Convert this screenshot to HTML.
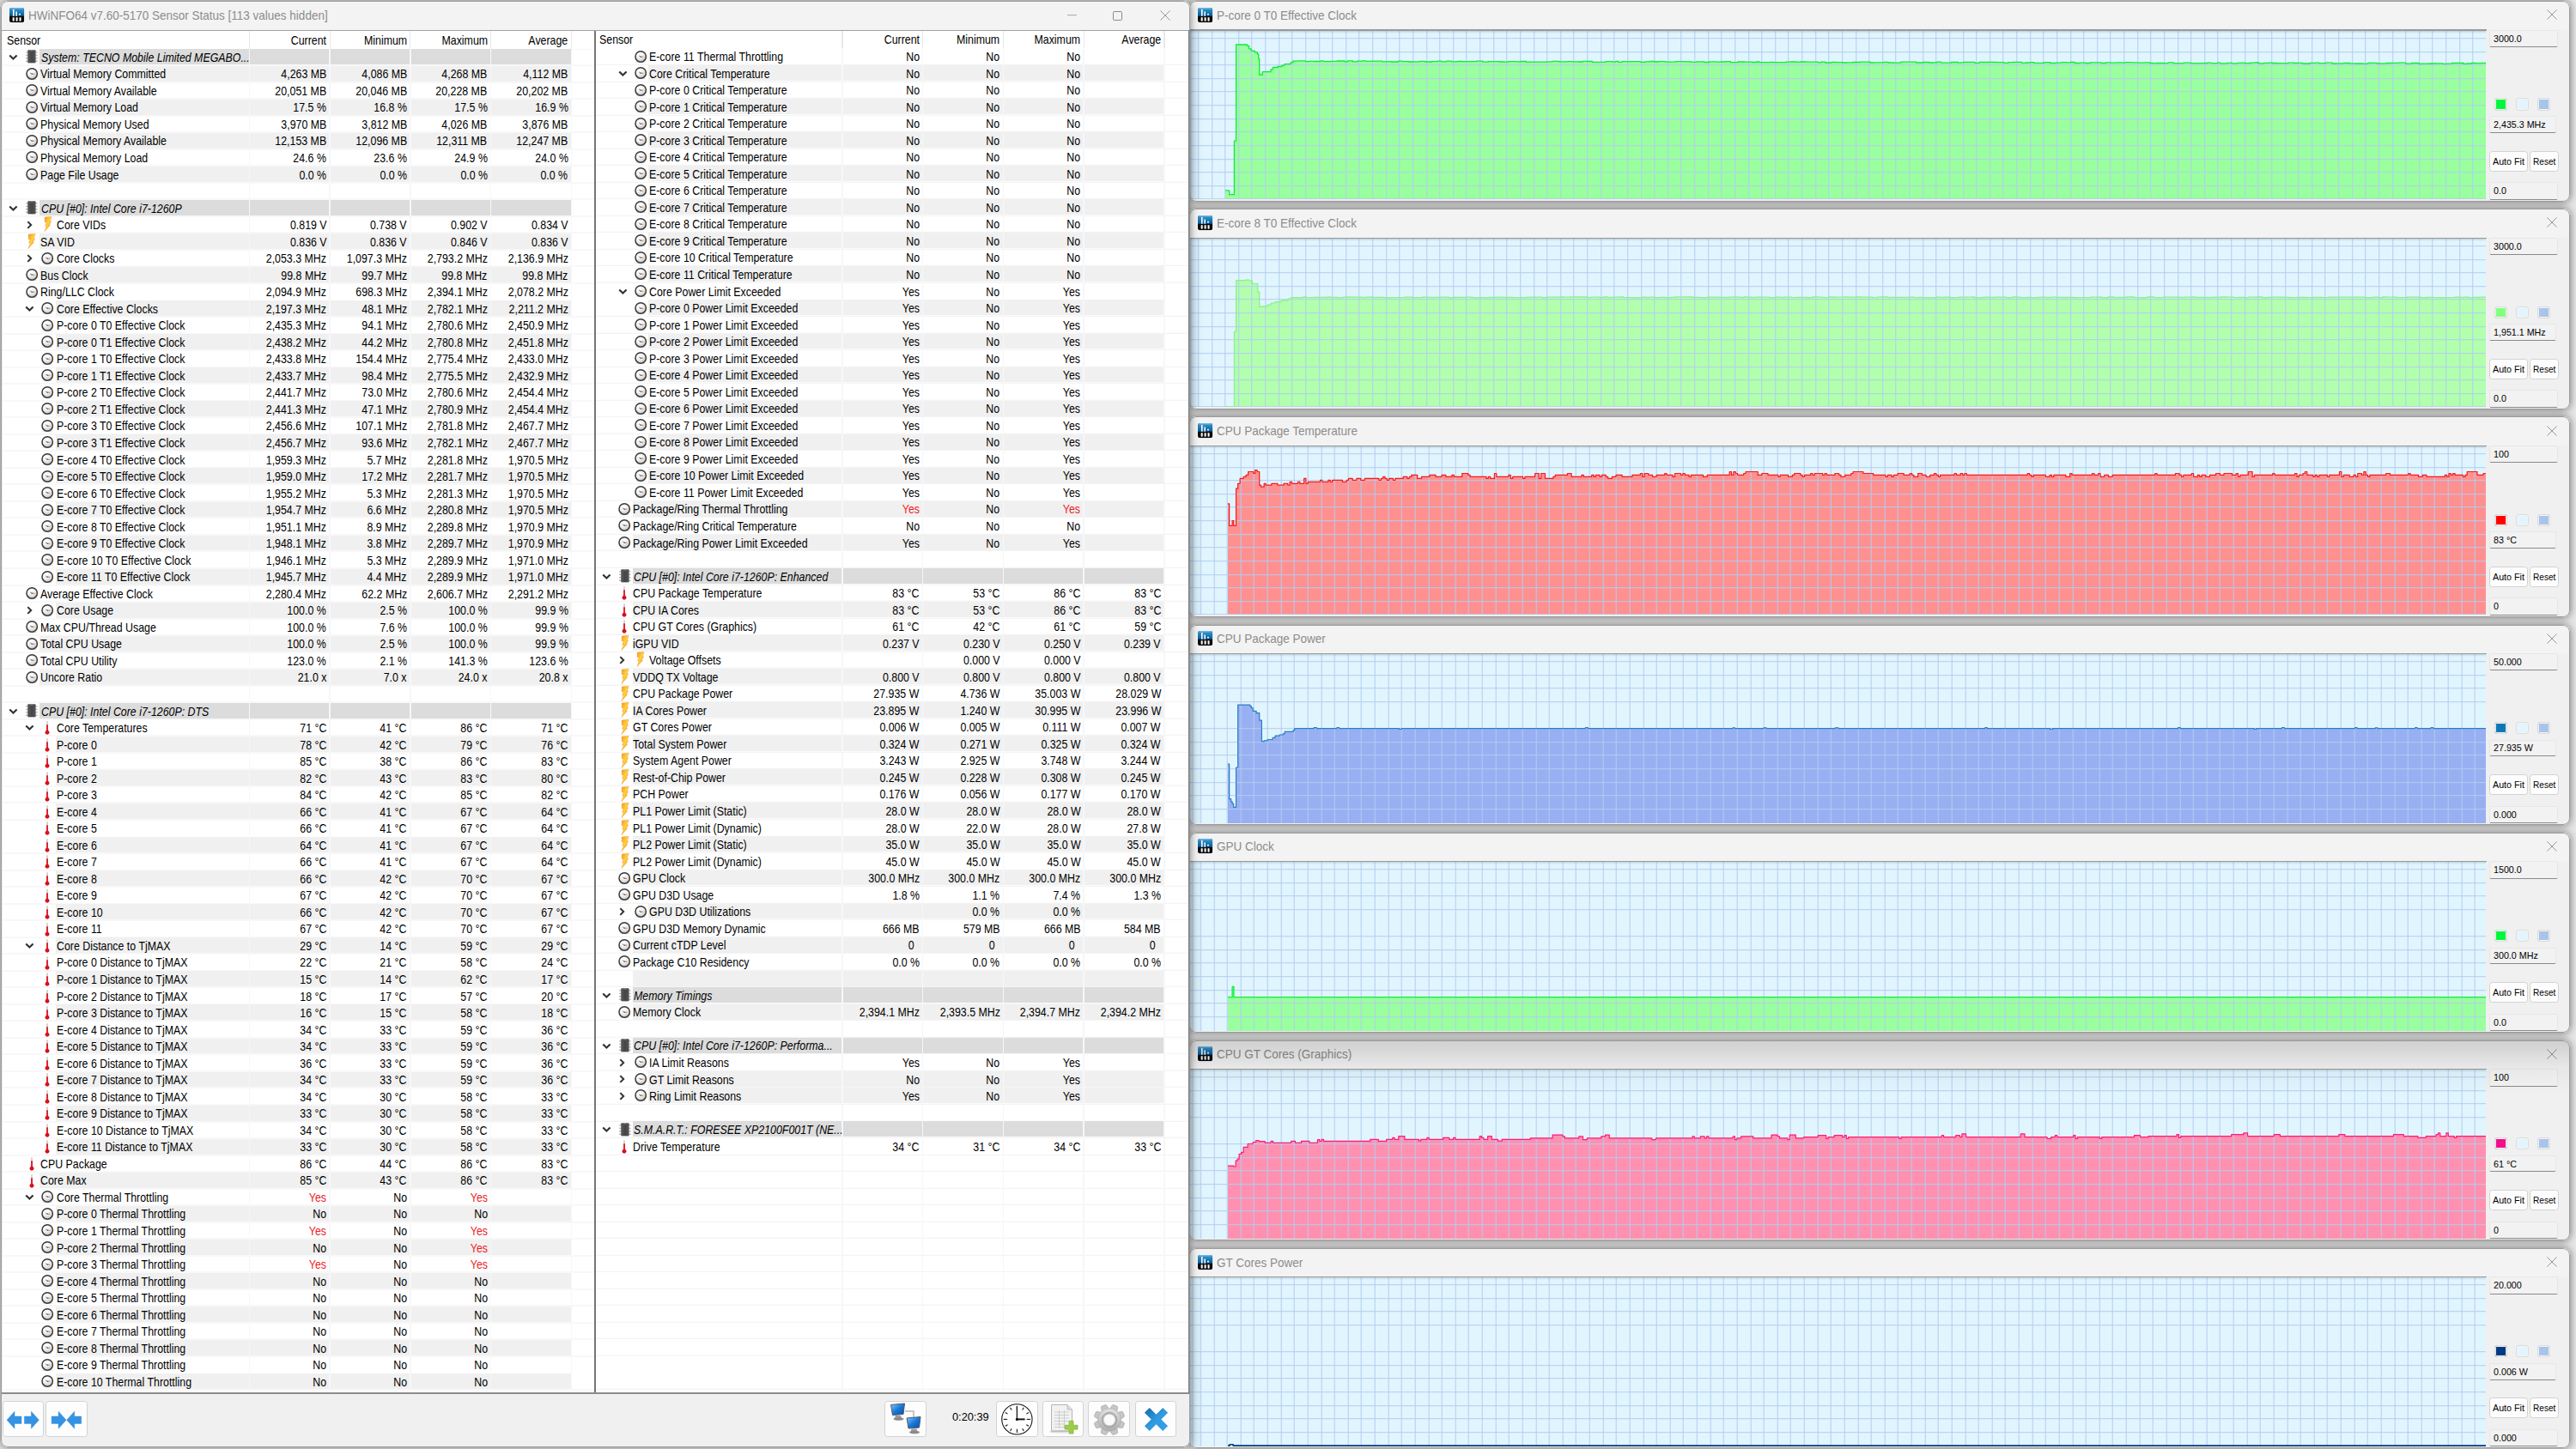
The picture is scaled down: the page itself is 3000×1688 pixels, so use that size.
<!DOCTYPE html><html><head><meta charset="utf-8"><title>HWiNFO64 Sensor Status</title><style>
*{box-sizing:border-box}
html,body{margin:0;padding:0}
body{width:3000px;height:1688px;overflow:hidden;position:relative;background:#e6e6e6;font-family:"Liberation Sans",sans-serif;color:#000}
p,b,i,u,s{position:absolute;margin:0;padding:0;font-weight:normal;font-style:normal;text-decoration:none;display:block}
svg{position:absolute;overflow:visible}
.win{position:absolute;background:#f0f0f0;border-radius:8px;box-shadow:0 0 8px 1px rgba(0,0,0,.42);overflow:hidden}
.wb{left:0;top:0;right:0;bottom:0;border:1px solid #9c9c9c;border-radius:8px}
.tb{position:absolute;left:0;top:0;right:0;background:#f3f3f3}
.tt{font-size:14.4px;line-height:20px;color:#8c8c8c;white-space:nowrap;transform:scaleX(.938);transform-origin:0 0}
.list{position:absolute;background:#fff;overflow:hidden}
.hl{left:0;right:0;top:0;bottom:0;background-image:repeating-linear-gradient(to bottom,transparent 0,transparent 18.53125px,#f1f1f1 18.53125px,#f1f1f1 19.53125px)}
.l,.v,.hd{font-size:14.1px;line-height:19.53125px;height:19.53125px;white-space:pre;transform:scaleX(0.878)}
.l{transform-origin:0 0;transform:scaleX(.878)}
.v,.hr{transform-origin:100% 0;text-align:right}
.it{font-style:italic}
.r{color:#ee1c25}
.sg{background:#f0f0f0;height:17.9px}
.sh{background:#dcdcdc;height:17.9px}
.vs{width:1.4px;top:0;bottom:0;background:#f7f7f7}
.btn{position:absolute;background:#fdfdfd;border:1px solid #d2d2d2;border-radius:3.5px}
.ga{position:absolute;background:#e1f5fe;overflow:hidden}
.gg{left:0;top:0;right:0;bottom:0}
.sb{font-size:11.4px;line-height:16px;white-space:pre;transform:scaleX(.94);transform-origin:0 0}
.ed{position:absolute;background:#f2f2f2;border:1px solid #e7e7e7;border-bottom:1.2px solid #8a8a8a;border-radius:2px}
.sq{position:absolute;width:14.4px;height:14.4px;border:1px solid #dcdcdc;border-radius:3px;box-shadow:inset 0 0 0 .9px #f5f5f5}
</style></head><body>
<svg width="0" height="0" style="left:-10px;top:-10px"><defs>
<radialGradient id="cg" cx="40%" cy="30%" r="70%"><stop offset="0" stop-color="#fff"/><stop offset=".5" stop-color="#f0f0f0"/><stop offset="1" stop-color="#c4c4c4"/></radialGradient>
<linearGradient id="bg1" x1="0" y1="0" x2="1" y2="1"><stop offset="0" stop-color="#f7931e"/><stop offset=".45" stop-color="#ffd23c"/><stop offset="1" stop-color="#f08a10"/></linearGradient>
<linearGradient id="chg" x1="0" y1="0" x2="1" y2="0"><stop offset="0" stop-color="#5c5c5c"/><stop offset=".5" stop-color="#454545"/><stop offset="1" stop-color="#565656"/></linearGradient>
<linearGradient id="apb" x1="0" y1="0" x2="0" y2="1"><stop offset="0" stop-color="#7cc4ea"/><stop offset=".25" stop-color="#2a8cc8"/><stop offset="1" stop-color="#075a94"/></linearGradient>
<symbol id="ck" viewBox="0 0 14 14"><ellipse cx="7" cy="13" rx="5.5" ry="1" fill="#000" opacity=".13"/><circle cx="7" cy="6.8" r="6.05" fill="url(#cg)" stroke="#3a3a3a" stroke-width="1.45"/><path d="M7.2 7 L4.9 5.7 M7 7 L9.9 7" stroke="#9a6a4a" stroke-width=".85" fill="none"/><circle cx="7" cy="7" r=".7" fill="#7a5038"/></symbol>
<symbol id="th" viewBox="0 0 6 16"><rect x="2" y="0" width="2" height="6" rx="1" fill="#d4d4d4"/><rect x="2.1" y="4.3" width="1.8" height="9" fill="#d9101c"/><circle cx="3" cy="13.2" r="2.45" fill="#d9101c"/></symbol>
<symbol id="bo" viewBox="0 0 10 18"><path d="M1.2 .7 L9.8 0 L7.4 5.9 L9 5.7 L6.6 10.4 L7.8 10.2 L.9 18 L3.3 11 L1.7 11.2 L3.4 6.6 L1.2 6.9 Z" fill="url(#bg1)" stroke="#e8861a" stroke-width=".35"/></symbol>
<symbol id="ch" viewBox="0 0 14 16"><path d="M0 2.2h2.4v1.4H0zM0 5.7h2.4v1.4H0zM0 9.2h2.4v1.4H0zM0 12.7h2.4v1.4H0zM11.6 2.2H14v1.4h-2.4zM11.6 5.7H14v1.4h-2.4zM11.6 9.2H14v1.4h-2.4zM11.6 12.7H14v1.4h-2.4z" fill="#b4b4b4"/><rect x="2.2" y=".2" width="9.6" height="15.6" rx="1" fill="url(#chg)"/><rect x="5.6" y=".2" width="2.8" height="1.3" fill="#8c8c8c"/></symbol>
<symbol id="cd" viewBox="0 0 10 7"><path d="M1.1 1.3 L5 5.2 L8.9 1.3" fill="none" stroke="#333" stroke-width="2" stroke-linejoin="miter"/></symbol>
<symbol id="cr" viewBox="0 0 7 10"><path d="M1.3 1.1 L5.2 5 L1.3 8.9" fill="none" stroke="#333" stroke-width="2" stroke-linejoin="miter"/></symbol>
<symbol id="ap" viewBox="0 0 17 17"><rect x="0" y="0" width="17" height="17" rx="2.6" fill="#0a0a0a"/><path d="M0 9.6V2.6Q0 0 2.6 0h11.8Q17 0 17 2.6v7z" fill="url(#apb)"/><path d="M3.9 1.9h1.6v7.7H3.9zM7.3 4.4h1.5v5.2H7.3z" fill="#fff"/><rect x="10.9" y="6.6" width="1.9" height="1.9" rx=".5" fill="#fff"/><path d="M3.6 11.2h2v3.6q0 .8-.9.8h-.2q-.9 0-.9-.8zM7.5 11.2h2v3.6q0 .8-.9.8h-.2q-.9 0-.9-.8zM11.4 11.2h2v3.6q0 .8-.9.8h-.2q-.9 0-.9-.8z" fill="#fff"/></symbol>
<symbol id="cx" viewBox="0 0 12 12"><path d="M.4 .4 L11.6 11.6 M11.6 .4 L.4 11.6" stroke="#909090" stroke-width=".95" fill="none"/></symbol>
</defs></svg>
<div class="win" style="z-index:3;left:.5px;top:1.1px;width:1385.3px;height:1684.9px"><div style="position:absolute;left:-.5px;top:-1.1px;width:1385.8px;height:1686px">
<b style="left:0;top:0;right:0;height:35px;background:#f3f3f3"></b>
<svg width="17.2" height="17.2" style="left:10.9px;top:8.9px"><use href="#ap"/></svg>
<p class="tt" style="left:33.4px;top:8.0px">HWiNFO64 v7.60-5170 Sensor Status [113 values hidden]</p>
<svg width="12" height="2" style="left:1242.6px;top:17.4px"><path d="M0 .6H11" stroke="#a8a8a8" stroke-width="1"/></svg>
<svg width="12" height="12" style="left:1296.4px;top:12.6px"><rect x=".5" y=".5" width="10" height="10" rx="1.3" fill="none" stroke="#8a8a8a" stroke-width="1"/></svg>
<svg width="12" height="12" style="left:1351.4px;top:12.2px"><use href="#cx"/></svg>
<b style="left:0;top:34.6px;right:0;height:1.2px;background:#a2a2a2"></b>
<b style="left:1.3px;top:35.8px;width:1.2px;height:1586.6000000000001px;background:#8a8a8a"></b>
<b style="left:0;top:1622.4px;right:0;height:1.3px;background:#8c8c8c"></b>
<div class="list" style="left:2.5px;top:35.8px;width:690.0px;height:1586.6px">
<b class="hl" style="background-position:0 1.47px"></b>
<b class="sh" style="left:43.7px;top:21.40px;width:619.7px"></b>
<b class="sg" style="left:43.7px;top:40.93px;width:619.7px"></b>
<b class="sg" style="left:43.7px;top:79.99px;width:619.7px"></b>
<b class="sg" style="left:43.7px;top:119.06px;width:619.7px"></b>
<b class="sg" style="left:43.7px;top:158.12px;width:619.7px"></b>
<b class="sh" style="left:43.7px;top:197.18px;width:619.7px"></b>
<b class="sg" style="left:43.7px;top:236.24px;width:619.7px"></b>
<b class="sg" style="left:43.7px;top:275.31px;width:619.7px"></b>
<b class="sg" style="left:62.3px;top:314.37px;width:601.1px"></b>
<b class="sg" style="left:62.3px;top:353.43px;width:601.1px"></b>
<b class="sg" style="left:62.3px;top:392.49px;width:601.1px"></b>
<b class="sg" style="left:62.3px;top:431.56px;width:601.1px"></b>
<b class="sg" style="left:62.3px;top:470.62px;width:601.1px"></b>
<b class="sg" style="left:62.3px;top:509.68px;width:601.1px"></b>
<b class="sg" style="left:62.3px;top:548.74px;width:601.1px"></b>
<b class="sg" style="left:62.3px;top:587.81px;width:601.1px"></b>
<b class="sg" style="left:62.3px;top:626.87px;width:601.1px"></b>
<b class="sg" style="left:62.3px;top:665.93px;width:601.1px"></b>
<b class="sg" style="left:43.7px;top:704.99px;width:619.7px"></b>
<b class="sg" style="left:43.7px;top:744.06px;width:619.7px"></b>
<b class="sh" style="left:43.7px;top:783.12px;width:619.7px"></b>
<b class="sg" style="left:62.3px;top:822.18px;width:601.1px"></b>
<b class="sg" style="left:62.3px;top:861.24px;width:601.1px"></b>
<b class="sg" style="left:62.3px;top:900.31px;width:601.1px"></b>
<b class="sg" style="left:62.3px;top:939.37px;width:601.1px"></b>
<b class="sg" style="left:62.3px;top:978.43px;width:601.1px"></b>
<b class="sg" style="left:62.3px;top:1017.49px;width:601.1px"></b>
<b class="sg" style="left:62.3px;top:1056.56px;width:601.1px"></b>
<b class="sg" style="left:62.3px;top:1095.62px;width:601.1px"></b>
<b class="sg" style="left:62.3px;top:1134.68px;width:601.1px"></b>
<b class="sg" style="left:62.3px;top:1173.74px;width:601.1px"></b>
<b class="sg" style="left:62.3px;top:1212.81px;width:601.1px"></b>
<b class="sg" style="left:62.3px;top:1251.87px;width:601.1px"></b>
<b class="sg" style="left:62.3px;top:1290.93px;width:601.1px"></b>
<b class="sg" style="left:43.7px;top:1329.99px;width:619.7px"></b>
<b class="sg" style="left:62.3px;top:1369.06px;width:601.1px"></b>
<b class="sg" style="left:62.3px;top:1408.12px;width:601.1px"></b>
<b class="sg" style="left:62.3px;top:1447.18px;width:601.1px"></b>
<b class="sg" style="left:62.3px;top:1486.24px;width:601.1px"></b>
<b class="sg" style="left:62.3px;top:1525.31px;width:601.1px"></b>
<b class="sg" style="left:62.3px;top:1564.37px;width:601.1px"></b>
<b class="vs" style="left:287.2px"></b>
<b class="vs" style="left:380.9px"></b>
<b class="vs" style="left:474.7px"></b>
<b class="vs" style="left:568.4px"></b>
<b class="vs" style="left:662.2px"></b>
<b style="left:0;top:0;right:0;height:21.5px;background:#fff"></b>
<b style="left:287.3px;top:0;width:1.2px;height:21.0px;background:#e8e8e8"></b>
<b style="left:381.0px;top:0;width:1.2px;height:21.0px;background:#e8e8e8"></b>
<b style="left:474.8px;top:0;width:1.2px;height:21.0px;background:#e8e8e8"></b>
<b style="left:568.5px;top:0;width:1.2px;height:21.0px;background:#e8e8e8"></b>
<b style="left:662.3px;top:0;width:1.2px;height:21.0px;background:#e8e8e8"></b>
<p class="hd l" style="left:5.1px;top:2.1px">Sensor</p>
<p class="hd hr" style="right:312.4px;top:2.1px">Current</p>
<p class="hd hr" style="right:218.6px;top:2.1px">Minimum</p>
<p class="hd hr" style="right:124.9px;top:2.1px">Maximum</p>
<p class="hd hr" style="right:31.1px;top:2.1px">Average</p>
<svg width="10.8" height="7.5" style="left:7.7px;top:27.2px"><use href="#cd"/></svg>
<svg width="13.8" height="15.8" style="left:27.5px;top:22.6px"><use href="#ch"/></svg>
<p class="l it" style="left:45.3px;top:22.00px">System: TECNO Mobile Limited MEGABO...</p>
<svg width="14.4" height="14.4" style="left:27.1px;top:43.0px"><use href="#ck"/></svg>
<p class="l" style="left:44.4px;top:41.53px">Virtual Memory Committed</p>
<p class="v" style="right:312.4px;top:41.53px">4,263 MB</p>
<p class="v" style="right:218.6px;top:41.53px">4,086 MB</p>
<p class="v" style="right:124.9px;top:41.53px">4,268 MB</p>
<p class="v" style="right:31.1px;top:41.53px">4,112 MB</p>
<svg width="14.4" height="14.4" style="left:27.1px;top:62.6px"><use href="#ck"/></svg>
<p class="l" style="left:44.4px;top:61.06px">Virtual Memory Available</p>
<p class="v" style="right:312.4px;top:61.06px">20,051 MB</p>
<p class="v" style="right:218.6px;top:61.06px">20,046 MB</p>
<p class="v" style="right:124.9px;top:61.06px">20,228 MB</p>
<p class="v" style="right:31.1px;top:61.06px">20,202 MB</p>
<svg width="14.4" height="14.4" style="left:27.1px;top:82.1px"><use href="#ck"/></svg>
<p class="l" style="left:44.4px;top:80.59px">Virtual Memory Load</p>
<p class="v" style="right:312.4px;top:80.59px">17.5 %</p>
<p class="v" style="right:218.6px;top:80.59px">16.8 %</p>
<p class="v" style="right:124.9px;top:80.59px">17.5 %</p>
<p class="v" style="right:31.1px;top:80.59px">16.9 %</p>
<svg width="14.4" height="14.4" style="left:27.1px;top:101.6px"><use href="#ck"/></svg>
<p class="l" style="left:44.4px;top:100.12px">Physical Memory Used</p>
<p class="v" style="right:312.4px;top:100.12px">3,970 MB</p>
<p class="v" style="right:218.6px;top:100.12px">3,812 MB</p>
<p class="v" style="right:124.9px;top:100.12px">4,026 MB</p>
<p class="v" style="right:31.1px;top:100.12px">3,876 MB</p>
<svg width="14.4" height="14.4" style="left:27.1px;top:121.2px"><use href="#ck"/></svg>
<p class="l" style="left:44.4px;top:119.66px">Physical Memory Available</p>
<p class="v" style="right:312.4px;top:119.66px">12,153 MB</p>
<p class="v" style="right:218.6px;top:119.66px">12,096 MB</p>
<p class="v" style="right:124.9px;top:119.66px">12,311 MB</p>
<p class="v" style="right:31.1px;top:119.66px">12,247 MB</p>
<svg width="14.4" height="14.4" style="left:27.1px;top:140.7px"><use href="#ck"/></svg>
<p class="l" style="left:44.4px;top:139.19px">Physical Memory Load</p>
<p class="v" style="right:312.4px;top:139.19px">24.6 %</p>
<p class="v" style="right:218.6px;top:139.19px">23.6 %</p>
<p class="v" style="right:124.9px;top:139.19px">24.9 %</p>
<p class="v" style="right:31.1px;top:139.19px">24.0 %</p>
<svg width="14.4" height="14.4" style="left:27.1px;top:160.2px"><use href="#ck"/></svg>
<p class="l" style="left:44.4px;top:158.72px">Page File Usage</p>
<p class="v" style="right:312.4px;top:158.72px">0.0 %</p>
<p class="v" style="right:218.6px;top:158.72px">0.0 %</p>
<p class="v" style="right:124.9px;top:158.72px">0.0 %</p>
<p class="v" style="right:31.1px;top:158.72px">0.0 %</p>
<svg width="10.8" height="7.5" style="left:7.7px;top:203.0px"><use href="#cd"/></svg>
<svg width="13.8" height="15.8" style="left:27.5px;top:198.4px"><use href="#ch"/></svg>
<p class="l it" style="left:45.3px;top:197.78px">CPU [#0]: Intel Core i7-1260P</p>
<svg width="7" height="10" style="left:28.1px;top:221.2px"><use href="#cr"/></svg>
<svg width="9.6" height="18" style="left:48.0px;top:216.6px"><use href="#bo"/></svg>
<p class="l" style="left:63.1px;top:217.31px">Core VIDs</p>
<p class="v" style="right:312.4px;top:217.31px">0.819 V</p>
<p class="v" style="right:218.6px;top:217.31px">0.738 V</p>
<p class="v" style="right:124.9px;top:217.31px">0.902 V</p>
<p class="v" style="right:31.1px;top:217.31px">0.834 V</p>
<svg width="9.6" height="18" style="left:29.5px;top:236.1px"><use href="#bo"/></svg>
<p class="l" style="left:44.4px;top:236.84px">SA VID</p>
<p class="v" style="right:312.4px;top:236.84px">0.836 V</p>
<p class="v" style="right:218.6px;top:236.84px">0.836 V</p>
<p class="v" style="right:124.9px;top:236.84px">0.846 V</p>
<p class="v" style="right:31.1px;top:236.84px">0.836 V</p>
<svg width="7" height="10" style="left:28.1px;top:260.3px"><use href="#cr"/></svg>
<svg width="14.4" height="14.4" style="left:45.6px;top:257.9px"><use href="#ck"/></svg>
<p class="l" style="left:63.1px;top:256.38px">Core Clocks</p>
<p class="v" style="right:312.4px;top:256.38px">2,053.3 MHz</p>
<p class="v" style="right:218.6px;top:256.38px">1,097.3 MHz</p>
<p class="v" style="right:124.9px;top:256.38px">2,793.2 MHz</p>
<p class="v" style="right:31.1px;top:256.38px">2,136.9 MHz</p>
<svg width="14.4" height="14.4" style="left:27.1px;top:277.4px"><use href="#ck"/></svg>
<p class="l" style="left:44.4px;top:275.91px">Bus Clock</p>
<p class="v" style="right:312.4px;top:275.91px">99.8 MHz</p>
<p class="v" style="right:218.6px;top:275.91px">99.7 MHz</p>
<p class="v" style="right:124.9px;top:275.91px">99.8 MHz</p>
<p class="v" style="right:31.1px;top:275.91px">99.8 MHz</p>
<svg width="14.4" height="14.4" style="left:27.1px;top:296.9px"><use href="#ck"/></svg>
<p class="l" style="left:44.4px;top:295.44px">Ring/LLC Clock</p>
<p class="v" style="right:312.4px;top:295.44px">2,094.9 MHz</p>
<p class="v" style="right:218.6px;top:295.44px">698.3 MHz</p>
<p class="v" style="right:124.9px;top:295.44px">2,394.1 MHz</p>
<p class="v" style="right:31.1px;top:295.44px">2,078.2 MHz</p>
<svg width="10.8" height="7.5" style="left:26.8px;top:320.2px"><use href="#cd"/></svg>
<svg width="14.4" height="14.4" style="left:45.6px;top:316.5px"><use href="#ck"/></svg>
<p class="l" style="left:63.1px;top:314.97px">Core Effective Clocks</p>
<p class="v" style="right:312.4px;top:314.97px">2,197.3 MHz</p>
<p class="v" style="right:218.6px;top:314.97px">48.1 MHz</p>
<p class="v" style="right:124.9px;top:314.97px">2,782.1 MHz</p>
<p class="v" style="right:31.1px;top:314.97px">2,211.2 MHz</p>
<svg width="14.4" height="14.4" style="left:45.6px;top:336.0px"><use href="#ck"/></svg>
<p class="l" style="left:63.1px;top:334.50px">P-core 0 T0 Effective Clock</p>
<p class="v" style="right:312.4px;top:334.50px">2,435.3 MHz</p>
<p class="v" style="right:218.6px;top:334.50px">94.1 MHz</p>
<p class="v" style="right:124.9px;top:334.50px">2,780.6 MHz</p>
<p class="v" style="right:31.1px;top:334.50px">2,450.9 MHz</p>
<svg width="14.4" height="14.4" style="left:45.6px;top:355.5px"><use href="#ck"/></svg>
<p class="l" style="left:63.1px;top:354.03px">P-core 0 T1 Effective Clock</p>
<p class="v" style="right:312.4px;top:354.03px">2,438.2 MHz</p>
<p class="v" style="right:218.6px;top:354.03px">44.2 MHz</p>
<p class="v" style="right:124.9px;top:354.03px">2,780.8 MHz</p>
<p class="v" style="right:31.1px;top:354.03px">2,451.8 MHz</p>
<svg width="14.4" height="14.4" style="left:45.6px;top:375.1px"><use href="#ck"/></svg>
<p class="l" style="left:63.1px;top:373.56px">P-core 1 T0 Effective Clock</p>
<p class="v" style="right:312.4px;top:373.56px">2,433.8 MHz</p>
<p class="v" style="right:218.6px;top:373.56px">154.4 MHz</p>
<p class="v" style="right:124.9px;top:373.56px">2,775.4 MHz</p>
<p class="v" style="right:31.1px;top:373.56px">2,433.0 MHz</p>
<svg width="14.4" height="14.4" style="left:45.6px;top:394.6px"><use href="#ck"/></svg>
<p class="l" style="left:63.1px;top:393.09px">P-core 1 T1 Effective Clock</p>
<p class="v" style="right:312.4px;top:393.09px">2,433.7 MHz</p>
<p class="v" style="right:218.6px;top:393.09px">98.4 MHz</p>
<p class="v" style="right:124.9px;top:393.09px">2,775.5 MHz</p>
<p class="v" style="right:31.1px;top:393.09px">2,432.9 MHz</p>
<svg width="14.4" height="14.4" style="left:45.6px;top:414.1px"><use href="#ck"/></svg>
<p class="l" style="left:63.1px;top:412.62px">P-core 2 T0 Effective Clock</p>
<p class="v" style="right:312.4px;top:412.62px">2,441.7 MHz</p>
<p class="v" style="right:218.6px;top:412.62px">73.0 MHz</p>
<p class="v" style="right:124.9px;top:412.62px">2,780.6 MHz</p>
<p class="v" style="right:31.1px;top:412.62px">2,454.4 MHz</p>
<svg width="14.4" height="14.4" style="left:45.6px;top:433.7px"><use href="#ck"/></svg>
<p class="l" style="left:63.1px;top:432.16px">P-core 2 T1 Effective Clock</p>
<p class="v" style="right:312.4px;top:432.16px">2,441.3 MHz</p>
<p class="v" style="right:218.6px;top:432.16px">47.1 MHz</p>
<p class="v" style="right:124.9px;top:432.16px">2,780.9 MHz</p>
<p class="v" style="right:31.1px;top:432.16px">2,454.4 MHz</p>
<svg width="14.4" height="14.4" style="left:45.6px;top:453.2px"><use href="#ck"/></svg>
<p class="l" style="left:63.1px;top:451.69px">P-core 3 T0 Effective Clock</p>
<p class="v" style="right:312.4px;top:451.69px">2,456.6 MHz</p>
<p class="v" style="right:218.6px;top:451.69px">107.1 MHz</p>
<p class="v" style="right:124.9px;top:451.69px">2,781.8 MHz</p>
<p class="v" style="right:31.1px;top:451.69px">2,467.7 MHz</p>
<svg width="14.4" height="14.4" style="left:45.6px;top:472.7px"><use href="#ck"/></svg>
<p class="l" style="left:63.1px;top:471.22px">P-core 3 T1 Effective Clock</p>
<p class="v" style="right:312.4px;top:471.22px">2,456.7 MHz</p>
<p class="v" style="right:218.6px;top:471.22px">93.6 MHz</p>
<p class="v" style="right:124.9px;top:471.22px">2,782.1 MHz</p>
<p class="v" style="right:31.1px;top:471.22px">2,467.7 MHz</p>
<svg width="14.4" height="14.4" style="left:45.6px;top:492.2px"><use href="#ck"/></svg>
<p class="l" style="left:63.1px;top:490.75px">E-core 4 T0 Effective Clock</p>
<p class="v" style="right:312.4px;top:490.75px">1,959.3 MHz</p>
<p class="v" style="right:218.6px;top:490.75px">5.7 MHz</p>
<p class="v" style="right:124.9px;top:490.75px">2,281.8 MHz</p>
<p class="v" style="right:31.1px;top:490.75px">1,970.5 MHz</p>
<svg width="14.4" height="14.4" style="left:45.6px;top:511.8px"><use href="#ck"/></svg>
<p class="l" style="left:63.1px;top:510.28px">E-core 5 T0 Effective Clock</p>
<p class="v" style="right:312.4px;top:510.28px">1,959.0 MHz</p>
<p class="v" style="right:218.6px;top:510.28px">17.2 MHz</p>
<p class="v" style="right:124.9px;top:510.28px">2,281.7 MHz</p>
<p class="v" style="right:31.1px;top:510.28px">1,970.5 MHz</p>
<svg width="14.4" height="14.4" style="left:45.6px;top:531.3px"><use href="#ck"/></svg>
<p class="l" style="left:63.1px;top:529.81px">E-core 6 T0 Effective Clock</p>
<p class="v" style="right:312.4px;top:529.81px">1,955.2 MHz</p>
<p class="v" style="right:218.6px;top:529.81px">5.3 MHz</p>
<p class="v" style="right:124.9px;top:529.81px">2,281.3 MHz</p>
<p class="v" style="right:31.1px;top:529.81px">1,970.5 MHz</p>
<svg width="14.4" height="14.4" style="left:45.6px;top:550.8px"><use href="#ck"/></svg>
<p class="l" style="left:63.1px;top:549.34px">E-core 7 T0 Effective Clock</p>
<p class="v" style="right:312.4px;top:549.34px">1,954.7 MHz</p>
<p class="v" style="right:218.6px;top:549.34px">6.6 MHz</p>
<p class="v" style="right:124.9px;top:549.34px">2,280.8 MHz</p>
<p class="v" style="right:31.1px;top:549.34px">1,970.5 MHz</p>
<svg width="14.4" height="14.4" style="left:45.6px;top:570.4px"><use href="#ck"/></svg>
<p class="l" style="left:63.1px;top:568.88px">E-core 8 T0 Effective Clock</p>
<p class="v" style="right:312.4px;top:568.88px">1,951.1 MHz</p>
<p class="v" style="right:218.6px;top:568.88px">8.9 MHz</p>
<p class="v" style="right:124.9px;top:568.88px">2,289.8 MHz</p>
<p class="v" style="right:31.1px;top:568.88px">1,970.9 MHz</p>
<svg width="14.4" height="14.4" style="left:45.6px;top:589.9px"><use href="#ck"/></svg>
<p class="l" style="left:63.1px;top:588.41px">E-core 9 T0 Effective Clock</p>
<p class="v" style="right:312.4px;top:588.41px">1,948.1 MHz</p>
<p class="v" style="right:218.6px;top:588.41px">3.8 MHz</p>
<p class="v" style="right:124.9px;top:588.41px">2,289.7 MHz</p>
<p class="v" style="right:31.1px;top:588.41px">1,970.9 MHz</p>
<svg width="14.4" height="14.4" style="left:45.6px;top:609.4px"><use href="#ck"/></svg>
<p class="l" style="left:63.1px;top:607.94px">E-core 10 T0 Effective Clock</p>
<p class="v" style="right:312.4px;top:607.94px">1,946.1 MHz</p>
<p class="v" style="right:218.6px;top:607.94px">5.3 MHz</p>
<p class="v" style="right:124.9px;top:607.94px">2,289.9 MHz</p>
<p class="v" style="right:31.1px;top:607.94px">1,971.0 MHz</p>
<svg width="14.4" height="14.4" style="left:45.6px;top:629.0px"><use href="#ck"/></svg>
<p class="l" style="left:63.1px;top:627.47px">E-core 11 T0 Effective Clock</p>
<p class="v" style="right:312.4px;top:627.47px">1,945.7 MHz</p>
<p class="v" style="right:218.6px;top:627.47px">4.4 MHz</p>
<p class="v" style="right:124.9px;top:627.47px">2,289.9 MHz</p>
<p class="v" style="right:31.1px;top:627.47px">1,971.0 MHz</p>
<svg width="14.4" height="14.4" style="left:27.1px;top:648.5px"><use href="#ck"/></svg>
<p class="l" style="left:44.4px;top:647.00px">Average Effective Clock</p>
<p class="v" style="right:312.4px;top:647.00px">2,280.4 MHz</p>
<p class="v" style="right:218.6px;top:647.00px">62.2 MHz</p>
<p class="v" style="right:124.9px;top:647.00px">2,606.7 MHz</p>
<p class="v" style="right:31.1px;top:647.00px">2,291.2 MHz</p>
<svg width="7" height="10" style="left:28.1px;top:670.4px"><use href="#cr"/></svg>
<svg width="14.4" height="14.4" style="left:45.6px;top:668.0px"><use href="#ck"/></svg>
<p class="l" style="left:63.1px;top:666.53px">Core Usage</p>
<p class="v" style="right:312.4px;top:666.53px">100.0 %</p>
<p class="v" style="right:218.6px;top:666.53px">2.5 %</p>
<p class="v" style="right:124.9px;top:666.53px">100.0 %</p>
<p class="v" style="right:31.1px;top:666.53px">99.9 %</p>
<svg width="14.4" height="14.4" style="left:27.1px;top:687.6px"><use href="#ck"/></svg>
<p class="l" style="left:44.4px;top:686.06px">Max CPU/Thread Usage</p>
<p class="v" style="right:312.4px;top:686.06px">100.0 %</p>
<p class="v" style="right:218.6px;top:686.06px">7.6 %</p>
<p class="v" style="right:124.9px;top:686.06px">100.0 %</p>
<p class="v" style="right:31.1px;top:686.06px">99.9 %</p>
<svg width="14.4" height="14.4" style="left:27.1px;top:707.1px"><use href="#ck"/></svg>
<p class="l" style="left:44.4px;top:705.59px">Total CPU Usage</p>
<p class="v" style="right:312.4px;top:705.59px">100.0 %</p>
<p class="v" style="right:218.6px;top:705.59px">2.5 %</p>
<p class="v" style="right:124.9px;top:705.59px">100.0 %</p>
<p class="v" style="right:31.1px;top:705.59px">99.9 %</p>
<svg width="14.4" height="14.4" style="left:27.1px;top:726.6px"><use href="#ck"/></svg>
<p class="l" style="left:44.4px;top:725.12px">Total CPU Utility</p>
<p class="v" style="right:312.4px;top:725.12px">123.0 %</p>
<p class="v" style="right:218.6px;top:725.12px">2.1 %</p>
<p class="v" style="right:124.9px;top:725.12px">141.3 %</p>
<p class="v" style="right:31.1px;top:725.12px">123.6 %</p>
<svg width="14.4" height="14.4" style="left:27.1px;top:746.2px"><use href="#ck"/></svg>
<p class="l" style="left:44.4px;top:744.66px">Uncore Ratio</p>
<p class="v" style="right:312.4px;top:744.66px">21.0 x</p>
<p class="v" style="right:218.6px;top:744.66px">7.0 x</p>
<p class="v" style="right:124.9px;top:744.66px">24.0 x</p>
<p class="v" style="right:31.1px;top:744.66px">20.8 x</p>
<svg width="10.8" height="7.5" style="left:7.7px;top:788.9px"><use href="#cd"/></svg>
<svg width="13.8" height="15.8" style="left:27.5px;top:784.3px"><use href="#ch"/></svg>
<p class="l it" style="left:45.3px;top:783.72px">CPU [#0]: Intel Core i7-1260P: DTS</p>
<svg width="10.8" height="7.5" style="left:26.8px;top:808.5px"><use href="#cd"/></svg>
<svg width="6" height="16" style="left:49.9px;top:804.5px"><use href="#th"/></svg>
<p class="l" style="left:63.1px;top:803.25px">Core Temperatures</p>
<p class="v" style="right:312.4px;top:803.25px">71 °C</p>
<p class="v" style="right:218.6px;top:803.25px">41 °C</p>
<p class="v" style="right:124.9px;top:803.25px">86 °C</p>
<p class="v" style="right:31.1px;top:803.25px">71 °C</p>
<svg width="6" height="16" style="left:49.9px;top:824.0px"><use href="#th"/></svg>
<p class="l" style="left:63.1px;top:822.78px">P-core 0</p>
<p class="v" style="right:312.4px;top:822.78px">78 °C</p>
<p class="v" style="right:218.6px;top:822.78px">42 °C</p>
<p class="v" style="right:124.9px;top:822.78px">79 °C</p>
<p class="v" style="right:31.1px;top:822.78px">76 °C</p>
<svg width="6" height="16" style="left:49.9px;top:843.5px"><use href="#th"/></svg>
<p class="l" style="left:63.1px;top:842.31px">P-core 1</p>
<p class="v" style="right:312.4px;top:842.31px">85 °C</p>
<p class="v" style="right:218.6px;top:842.31px">38 °C</p>
<p class="v" style="right:124.9px;top:842.31px">86 °C</p>
<p class="v" style="right:31.1px;top:842.31px">83 °C</p>
<svg width="6" height="16" style="left:49.9px;top:863.0px"><use href="#th"/></svg>
<p class="l" style="left:63.1px;top:861.84px">P-core 2</p>
<p class="v" style="right:312.4px;top:861.84px">82 °C</p>
<p class="v" style="right:218.6px;top:861.84px">43 °C</p>
<p class="v" style="right:124.9px;top:861.84px">83 °C</p>
<p class="v" style="right:31.1px;top:861.84px">80 °C</p>
<svg width="6" height="16" style="left:49.9px;top:882.6px"><use href="#th"/></svg>
<p class="l" style="left:63.1px;top:881.38px">P-core 3</p>
<p class="v" style="right:312.4px;top:881.38px">84 °C</p>
<p class="v" style="right:218.6px;top:881.38px">42 °C</p>
<p class="v" style="right:124.9px;top:881.38px">85 °C</p>
<p class="v" style="right:31.1px;top:881.38px">82 °C</p>
<svg width="6" height="16" style="left:49.9px;top:902.1px"><use href="#th"/></svg>
<p class="l" style="left:63.1px;top:900.91px">E-core 4</p>
<p class="v" style="right:312.4px;top:900.91px">66 °C</p>
<p class="v" style="right:218.6px;top:900.91px">41 °C</p>
<p class="v" style="right:124.9px;top:900.91px">67 °C</p>
<p class="v" style="right:31.1px;top:900.91px">64 °C</p>
<svg width="6" height="16" style="left:49.9px;top:921.6px"><use href="#th"/></svg>
<p class="l" style="left:63.1px;top:920.44px">E-core 5</p>
<p class="v" style="right:312.4px;top:920.44px">66 °C</p>
<p class="v" style="right:218.6px;top:920.44px">41 °C</p>
<p class="v" style="right:124.9px;top:920.44px">67 °C</p>
<p class="v" style="right:31.1px;top:920.44px">64 °C</p>
<svg width="6" height="16" style="left:49.9px;top:941.2px"><use href="#th"/></svg>
<p class="l" style="left:63.1px;top:939.97px">E-core 6</p>
<p class="v" style="right:312.4px;top:939.97px">64 °C</p>
<p class="v" style="right:218.6px;top:939.97px">41 °C</p>
<p class="v" style="right:124.9px;top:939.97px">67 °C</p>
<p class="v" style="right:31.1px;top:939.97px">64 °C</p>
<svg width="6" height="16" style="left:49.9px;top:960.7px"><use href="#th"/></svg>
<p class="l" style="left:63.1px;top:959.50px">E-core 7</p>
<p class="v" style="right:312.4px;top:959.50px">66 °C</p>
<p class="v" style="right:218.6px;top:959.50px">41 °C</p>
<p class="v" style="right:124.9px;top:959.50px">67 °C</p>
<p class="v" style="right:31.1px;top:959.50px">64 °C</p>
<svg width="6" height="16" style="left:49.9px;top:980.2px"><use href="#th"/></svg>
<p class="l" style="left:63.1px;top:979.03px">E-core 8</p>
<p class="v" style="right:312.4px;top:979.03px">66 °C</p>
<p class="v" style="right:218.6px;top:979.03px">42 °C</p>
<p class="v" style="right:124.9px;top:979.03px">70 °C</p>
<p class="v" style="right:31.1px;top:979.03px">67 °C</p>
<svg width="6" height="16" style="left:49.9px;top:999.8px"><use href="#th"/></svg>
<p class="l" style="left:63.1px;top:998.56px">E-core 9</p>
<p class="v" style="right:312.4px;top:998.56px">67 °C</p>
<p class="v" style="right:218.6px;top:998.56px">42 °C</p>
<p class="v" style="right:124.9px;top:998.56px">70 °C</p>
<p class="v" style="right:31.1px;top:998.56px">67 °C</p>
<svg width="6" height="16" style="left:49.9px;top:1019.3px"><use href="#th"/></svg>
<p class="l" style="left:63.1px;top:1018.09px">E-core 10</p>
<p class="v" style="right:312.4px;top:1018.09px">66 °C</p>
<p class="v" style="right:218.6px;top:1018.09px">42 °C</p>
<p class="v" style="right:124.9px;top:1018.09px">70 °C</p>
<p class="v" style="right:31.1px;top:1018.09px">67 °C</p>
<svg width="6" height="16" style="left:49.9px;top:1038.8px"><use href="#th"/></svg>
<p class="l" style="left:63.1px;top:1037.62px">E-core 11</p>
<p class="v" style="right:312.4px;top:1037.62px">67 °C</p>
<p class="v" style="right:218.6px;top:1037.62px">42 °C</p>
<p class="v" style="right:124.9px;top:1037.62px">70 °C</p>
<p class="v" style="right:31.1px;top:1037.62px">67 °C</p>
<svg width="10.8" height="7.5" style="left:26.8px;top:1062.4px"><use href="#cd"/></svg>
<svg width="6" height="16" style="left:49.9px;top:1058.4px"><use href="#th"/></svg>
<p class="l" style="left:63.1px;top:1057.16px">Core Distance to TjMAX</p>
<p class="v" style="right:312.4px;top:1057.16px">29 °C</p>
<p class="v" style="right:218.6px;top:1057.16px">14 °C</p>
<p class="v" style="right:124.9px;top:1057.16px">59 °C</p>
<p class="v" style="right:31.1px;top:1057.16px">29 °C</p>
<svg width="6" height="16" style="left:49.9px;top:1077.9px"><use href="#th"/></svg>
<p class="l" style="left:63.1px;top:1076.69px">P-core 0 Distance to TjMAX</p>
<p class="v" style="right:312.4px;top:1076.69px">22 °C</p>
<p class="v" style="right:218.6px;top:1076.69px">21 °C</p>
<p class="v" style="right:124.9px;top:1076.69px">58 °C</p>
<p class="v" style="right:31.1px;top:1076.69px">24 °C</p>
<svg width="6" height="16" style="left:49.9px;top:1097.4px"><use href="#th"/></svg>
<p class="l" style="left:63.1px;top:1096.22px">P-core 1 Distance to TjMAX</p>
<p class="v" style="right:312.4px;top:1096.22px">15 °C</p>
<p class="v" style="right:218.6px;top:1096.22px">14 °C</p>
<p class="v" style="right:124.9px;top:1096.22px">62 °C</p>
<p class="v" style="right:31.1px;top:1096.22px">17 °C</p>
<svg width="6" height="16" style="left:49.9px;top:1117.0px"><use href="#th"/></svg>
<p class="l" style="left:63.1px;top:1115.75px">P-core 2 Distance to TjMAX</p>
<p class="v" style="right:312.4px;top:1115.75px">18 °C</p>
<p class="v" style="right:218.6px;top:1115.75px">17 °C</p>
<p class="v" style="right:124.9px;top:1115.75px">57 °C</p>
<p class="v" style="right:31.1px;top:1115.75px">20 °C</p>
<svg width="6" height="16" style="left:49.9px;top:1136.5px"><use href="#th"/></svg>
<p class="l" style="left:63.1px;top:1135.28px">P-core 3 Distance to TjMAX</p>
<p class="v" style="right:312.4px;top:1135.28px">16 °C</p>
<p class="v" style="right:218.6px;top:1135.28px">15 °C</p>
<p class="v" style="right:124.9px;top:1135.28px">58 °C</p>
<p class="v" style="right:31.1px;top:1135.28px">18 °C</p>
<svg width="6" height="16" style="left:49.9px;top:1156.0px"><use href="#th"/></svg>
<p class="l" style="left:63.1px;top:1154.81px">E-core 4 Distance to TjMAX</p>
<p class="v" style="right:312.4px;top:1154.81px">34 °C</p>
<p class="v" style="right:218.6px;top:1154.81px">33 °C</p>
<p class="v" style="right:124.9px;top:1154.81px">59 °C</p>
<p class="v" style="right:31.1px;top:1154.81px">36 °C</p>
<svg width="6" height="16" style="left:49.9px;top:1175.5px"><use href="#th"/></svg>
<p class="l" style="left:63.1px;top:1174.34px">E-core 5 Distance to TjMAX</p>
<p class="v" style="right:312.4px;top:1174.34px">34 °C</p>
<p class="v" style="right:218.6px;top:1174.34px">33 °C</p>
<p class="v" style="right:124.9px;top:1174.34px">59 °C</p>
<p class="v" style="right:31.1px;top:1174.34px">36 °C</p>
<svg width="6" height="16" style="left:49.9px;top:1195.1px"><use href="#th"/></svg>
<p class="l" style="left:63.1px;top:1193.88px">E-core 6 Distance to TjMAX</p>
<p class="v" style="right:312.4px;top:1193.88px">36 °C</p>
<p class="v" style="right:218.6px;top:1193.88px">33 °C</p>
<p class="v" style="right:124.9px;top:1193.88px">59 °C</p>
<p class="v" style="right:31.1px;top:1193.88px">36 °C</p>
<svg width="6" height="16" style="left:49.9px;top:1214.6px"><use href="#th"/></svg>
<p class="l" style="left:63.1px;top:1213.41px">E-core 7 Distance to TjMAX</p>
<p class="v" style="right:312.4px;top:1213.41px">34 °C</p>
<p class="v" style="right:218.6px;top:1213.41px">33 °C</p>
<p class="v" style="right:124.9px;top:1213.41px">59 °C</p>
<p class="v" style="right:31.1px;top:1213.41px">36 °C</p>
<svg width="6" height="16" style="left:49.9px;top:1234.1px"><use href="#th"/></svg>
<p class="l" style="left:63.1px;top:1232.94px">E-core 8 Distance to TjMAX</p>
<p class="v" style="right:312.4px;top:1232.94px">34 °C</p>
<p class="v" style="right:218.6px;top:1232.94px">30 °C</p>
<p class="v" style="right:124.9px;top:1232.94px">58 °C</p>
<p class="v" style="right:31.1px;top:1232.94px">33 °C</p>
<svg width="6" height="16" style="left:49.9px;top:1253.7px"><use href="#th"/></svg>
<p class="l" style="left:63.1px;top:1252.47px">E-core 9 Distance to TjMAX</p>
<p class="v" style="right:312.4px;top:1252.47px">33 °C</p>
<p class="v" style="right:218.6px;top:1252.47px">30 °C</p>
<p class="v" style="right:124.9px;top:1252.47px">58 °C</p>
<p class="v" style="right:31.1px;top:1252.47px">33 °C</p>
<svg width="6" height="16" style="left:49.9px;top:1273.2px"><use href="#th"/></svg>
<p class="l" style="left:63.1px;top:1272.00px">E-core 10 Distance to TjMAX</p>
<p class="v" style="right:312.4px;top:1272.00px">34 °C</p>
<p class="v" style="right:218.6px;top:1272.00px">30 °C</p>
<p class="v" style="right:124.9px;top:1272.00px">58 °C</p>
<p class="v" style="right:31.1px;top:1272.00px">33 °C</p>
<svg width="6" height="16" style="left:49.9px;top:1292.7px"><use href="#th"/></svg>
<p class="l" style="left:63.1px;top:1291.53px">E-core 11 Distance to TjMAX</p>
<p class="v" style="right:312.4px;top:1291.53px">33 °C</p>
<p class="v" style="right:218.6px;top:1291.53px">30 °C</p>
<p class="v" style="right:124.9px;top:1291.53px">58 °C</p>
<p class="v" style="right:31.1px;top:1291.53px">33 °C</p>
<svg width="6" height="16" style="left:31.4px;top:1312.3px"><use href="#th"/></svg>
<p class="l" style="left:44.4px;top:1311.06px">CPU Package</p>
<p class="v" style="right:312.4px;top:1311.06px">86 °C</p>
<p class="v" style="right:218.6px;top:1311.06px">44 °C</p>
<p class="v" style="right:124.9px;top:1311.06px">86 °C</p>
<p class="v" style="right:31.1px;top:1311.06px">83 °C</p>
<svg width="6" height="16" style="left:31.4px;top:1331.8px"><use href="#th"/></svg>
<p class="l" style="left:44.4px;top:1330.59px">Core Max</p>
<p class="v" style="right:312.4px;top:1330.59px">85 °C</p>
<p class="v" style="right:218.6px;top:1330.59px">43 °C</p>
<p class="v" style="right:124.9px;top:1330.59px">86 °C</p>
<p class="v" style="right:31.1px;top:1330.59px">83 °C</p>
<svg width="10.8" height="7.5" style="left:26.8px;top:1355.3px"><use href="#cd"/></svg>
<svg width="14.4" height="14.4" style="left:45.6px;top:1351.6px"><use href="#ck"/></svg>
<p class="l" style="left:63.1px;top:1350.12px">Core Thermal Throttling</p>
<p class="v r" style="right:312.4px;top:1350.12px">Yes</p>
<p class="v" style="right:218.6px;top:1350.12px">No</p>
<p class="v r" style="right:124.9px;top:1350.12px">Yes</p>
<svg width="14.4" height="14.4" style="left:45.6px;top:1371.2px"><use href="#ck"/></svg>
<p class="l" style="left:63.1px;top:1369.66px">P-core 0 Thermal Throttling</p>
<p class="v" style="right:312.4px;top:1369.66px">No</p>
<p class="v" style="right:218.6px;top:1369.66px">No</p>
<p class="v" style="right:124.9px;top:1369.66px">No</p>
<svg width="14.4" height="14.4" style="left:45.6px;top:1390.7px"><use href="#ck"/></svg>
<p class="l" style="left:63.1px;top:1389.19px">P-core 1 Thermal Throttling</p>
<p class="v r" style="right:312.4px;top:1389.19px">Yes</p>
<p class="v" style="right:218.6px;top:1389.19px">No</p>
<p class="v r" style="right:124.9px;top:1389.19px">Yes</p>
<svg width="14.4" height="14.4" style="left:45.6px;top:1410.2px"><use href="#ck"/></svg>
<p class="l" style="left:63.1px;top:1408.72px">P-core 2 Thermal Throttling</p>
<p class="v" style="right:312.4px;top:1408.72px">No</p>
<p class="v" style="right:218.6px;top:1408.72px">No</p>
<p class="v r" style="right:124.9px;top:1408.72px">Yes</p>
<svg width="14.4" height="14.4" style="left:45.6px;top:1429.8px"><use href="#ck"/></svg>
<p class="l" style="left:63.1px;top:1428.25px">P-core 3 Thermal Throttling</p>
<p class="v r" style="right:312.4px;top:1428.25px">Yes</p>
<p class="v" style="right:218.6px;top:1428.25px">No</p>
<p class="v r" style="right:124.9px;top:1428.25px">Yes</p>
<svg width="14.4" height="14.4" style="left:45.6px;top:1449.3px"><use href="#ck"/></svg>
<p class="l" style="left:63.1px;top:1447.78px">E-core 4 Thermal Throttling</p>
<p class="v" style="right:312.4px;top:1447.78px">No</p>
<p class="v" style="right:218.6px;top:1447.78px">No</p>
<p class="v" style="right:124.9px;top:1447.78px">No</p>
<svg width="14.4" height="14.4" style="left:45.6px;top:1468.8px"><use href="#ck"/></svg>
<p class="l" style="left:63.1px;top:1467.31px">E-core 5 Thermal Throttling</p>
<p class="v" style="right:312.4px;top:1467.31px">No</p>
<p class="v" style="right:218.6px;top:1467.31px">No</p>
<p class="v" style="right:124.9px;top:1467.31px">No</p>
<svg width="14.4" height="14.4" style="left:45.6px;top:1488.3px"><use href="#ck"/></svg>
<p class="l" style="left:63.1px;top:1486.84px">E-core 6 Thermal Throttling</p>
<p class="v" style="right:312.4px;top:1486.84px">No</p>
<p class="v" style="right:218.6px;top:1486.84px">No</p>
<p class="v" style="right:124.9px;top:1486.84px">No</p>
<svg width="14.4" height="14.4" style="left:45.6px;top:1507.9px"><use href="#ck"/></svg>
<p class="l" style="left:63.1px;top:1506.38px">E-core 7 Thermal Throttling</p>
<p class="v" style="right:312.4px;top:1506.38px">No</p>
<p class="v" style="right:218.6px;top:1506.38px">No</p>
<p class="v" style="right:124.9px;top:1506.38px">No</p>
<svg width="14.4" height="14.4" style="left:45.6px;top:1527.4px"><use href="#ck"/></svg>
<p class="l" style="left:63.1px;top:1525.91px">E-core 8 Thermal Throttling</p>
<p class="v" style="right:312.4px;top:1525.91px">No</p>
<p class="v" style="right:218.6px;top:1525.91px">No</p>
<p class="v" style="right:124.9px;top:1525.91px">No</p>
<svg width="14.4" height="14.4" style="left:45.6px;top:1546.9px"><use href="#ck"/></svg>
<p class="l" style="left:63.1px;top:1545.44px">E-core 9 Thermal Throttling</p>
<p class="v" style="right:312.4px;top:1545.44px">No</p>
<p class="v" style="right:218.6px;top:1545.44px">No</p>
<p class="v" style="right:124.9px;top:1545.44px">No</p>
<svg width="14.4" height="14.4" style="left:45.6px;top:1566.5px"><use href="#ck"/></svg>
<p class="l" style="left:63.1px;top:1564.97px">E-core 10 Thermal Throttling</p>
<p class="v" style="right:312.4px;top:1564.97px">No</p>
<p class="v" style="right:218.6px;top:1564.97px">No</p>
<p class="v" style="right:124.9px;top:1564.97px">No</p>
</div>
<b style="left:692.4px;top:35.8px;width:1.8px;height:1586.6000000000001px;background:#767676"></b>
<div class="list" style="left:694.2px;top:35.8px;width:689.4px;height:1586.6px">
<b class="hl" style="background-position:0 0.77px"></b>
<b class="sg" style="left:61.2px;top:40.23px;width:601.1px"></b>
<b class="sg" style="left:61.2px;top:79.29px;width:601.1px"></b>
<b class="sg" style="left:61.2px;top:118.36px;width:601.1px"></b>
<b class="sg" style="left:61.2px;top:157.42px;width:601.1px"></b>
<b class="sg" style="left:61.2px;top:196.48px;width:601.1px"></b>
<b class="sg" style="left:61.2px;top:235.54px;width:601.1px"></b>
<b class="sg" style="left:61.2px;top:274.61px;width:601.1px"></b>
<b class="sg" style="left:61.2px;top:313.67px;width:601.1px"></b>
<b class="sg" style="left:61.2px;top:352.73px;width:601.1px"></b>
<b class="sg" style="left:61.2px;top:391.79px;width:601.1px"></b>
<b class="sg" style="left:61.2px;top:430.86px;width:601.1px"></b>
<b class="sg" style="left:61.2px;top:469.92px;width:601.1px"></b>
<b class="sg" style="left:61.2px;top:508.98px;width:601.1px"></b>
<b class="sg" style="left:42.6px;top:548.04px;width:619.7px"></b>
<b class="sg" style="left:42.6px;top:587.11px;width:619.7px"></b>
<b class="sh" style="left:42.6px;top:626.17px;width:619.7px"></b>
<b class="sg" style="left:42.6px;top:665.23px;width:619.7px"></b>
<b class="sg" style="left:42.6px;top:704.29px;width:619.7px"></b>
<b class="sg" style="left:42.6px;top:743.36px;width:619.7px"></b>
<b class="sg" style="left:42.6px;top:782.42px;width:619.7px"></b>
<b class="sg" style="left:42.6px;top:821.48px;width:619.7px"></b>
<b class="sg" style="left:42.6px;top:860.54px;width:619.7px"></b>
<b class="sg" style="left:42.6px;top:899.61px;width:619.7px"></b>
<b class="sg" style="left:42.6px;top:938.67px;width:619.7px"></b>
<b class="sg" style="left:42.6px;top:977.73px;width:619.7px"></b>
<b class="sg" style="left:61.2px;top:1016.79px;width:601.1px"></b>
<b class="sg" style="left:42.6px;top:1055.86px;width:619.7px"></b>
<b class="sg" style="left:42.6px;top:1094.92px;width:619.7px"></b>
<b class="sh" style="left:42.6px;top:1114.45px;width:619.7px"></b>
<b class="sg" style="left:42.6px;top:1133.98px;width:619.7px"></b>
<b class="sh" style="left:42.6px;top:1173.04px;width:619.7px"></b>
<b class="sg" style="left:61.2px;top:1212.11px;width:601.1px"></b>
<b class="sg" style="left:61.2px;top:1231.64px;width:601.1px"></b>
<b class="sh" style="left:42.6px;top:1270.70px;width:619.7px"></b>
<b class="vs" style="left:286.1px"></b>
<b class="vs" style="left:379.8px"></b>
<b class="vs" style="left:473.6px"></b>
<b class="vs" style="left:567.3px"></b>
<b class="vs" style="left:661.1px"></b>
<b style="left:0;top:0;right:0;height:20.8px;background:#fff"></b>
<b style="left:286.2px;top:0;width:1.2px;height:20.3px;background:#e8e8e8"></b>
<b style="left:379.9px;top:0;width:1.2px;height:20.3px;background:#e8e8e8"></b>
<b style="left:473.7px;top:0;width:1.2px;height:20.3px;background:#e8e8e8"></b>
<b style="left:567.4px;top:0;width:1.2px;height:20.3px;background:#e8e8e8"></b>
<b style="left:661.2px;top:0;width:1.2px;height:20.3px;background:#e8e8e8"></b>
<p class="hd l" style="left:4.0px;top:1.4px">Sensor</p>
<p class="hd hr" style="right:312.9px;top:1.4px">Current</p>
<p class="hd hr" style="right:219.1px;top:1.4px">Minimum</p>
<p class="hd hr" style="right:125.4px;top:1.4px">Maximum</p>
<p class="hd hr" style="right:31.6px;top:1.4px">Average</p>
<svg width="14.4" height="14.4" style="left:44.5px;top:22.8px"><use href="#ck"/></svg>
<p class="l" style="left:62.0px;top:21.30px">E-core 11 Thermal Throttling</p>
<p class="v" style="right:312.9px;top:21.30px">No</p>
<p class="v" style="right:219.1px;top:21.30px">No</p>
<p class="v" style="right:125.4px;top:21.30px">No</p>
<svg width="10.8" height="7.5" style="left:25.7px;top:46.0px"><use href="#cd"/></svg>
<svg width="14.4" height="14.4" style="left:44.5px;top:42.3px"><use href="#ck"/></svg>
<p class="l" style="left:62.0px;top:40.83px">Core Critical Temperature</p>
<p class="v" style="right:312.9px;top:40.83px">No</p>
<p class="v" style="right:219.1px;top:40.83px">No</p>
<p class="v" style="right:125.4px;top:40.83px">No</p>
<svg width="14.4" height="14.4" style="left:44.5px;top:61.9px"><use href="#ck"/></svg>
<p class="l" style="left:62.0px;top:60.36px">P-core 0 Critical Temperature</p>
<p class="v" style="right:312.9px;top:60.36px">No</p>
<p class="v" style="right:219.1px;top:60.36px">No</p>
<p class="v" style="right:125.4px;top:60.36px">No</p>
<svg width="14.4" height="14.4" style="left:44.5px;top:81.4px"><use href="#ck"/></svg>
<p class="l" style="left:62.0px;top:79.89px">P-core 1 Critical Temperature</p>
<p class="v" style="right:312.9px;top:79.89px">No</p>
<p class="v" style="right:219.1px;top:79.89px">No</p>
<p class="v" style="right:125.4px;top:79.89px">No</p>
<svg width="14.4" height="14.4" style="left:44.5px;top:100.9px"><use href="#ck"/></svg>
<p class="l" style="left:62.0px;top:99.43px">P-core 2 Critical Temperature</p>
<p class="v" style="right:312.9px;top:99.43px">No</p>
<p class="v" style="right:219.1px;top:99.43px">No</p>
<p class="v" style="right:125.4px;top:99.43px">No</p>
<svg width="14.4" height="14.4" style="left:44.5px;top:120.5px"><use href="#ck"/></svg>
<p class="l" style="left:62.0px;top:118.96px">P-core 3 Critical Temperature</p>
<p class="v" style="right:312.9px;top:118.96px">No</p>
<p class="v" style="right:219.1px;top:118.96px">No</p>
<p class="v" style="right:125.4px;top:118.96px">No</p>
<svg width="14.4" height="14.4" style="left:44.5px;top:140.0px"><use href="#ck"/></svg>
<p class="l" style="left:62.0px;top:138.49px">E-core 4 Critical Temperature</p>
<p class="v" style="right:312.9px;top:138.49px">No</p>
<p class="v" style="right:219.1px;top:138.49px">No</p>
<p class="v" style="right:125.4px;top:138.49px">No</p>
<svg width="14.4" height="14.4" style="left:44.5px;top:159.5px"><use href="#ck"/></svg>
<p class="l" style="left:62.0px;top:158.02px">E-core 5 Critical Temperature</p>
<p class="v" style="right:312.9px;top:158.02px">No</p>
<p class="v" style="right:219.1px;top:158.02px">No</p>
<p class="v" style="right:125.4px;top:158.02px">No</p>
<svg width="14.4" height="14.4" style="left:44.5px;top:179.1px"><use href="#ck"/></svg>
<p class="l" style="left:62.0px;top:177.55px">E-core 6 Critical Temperature</p>
<p class="v" style="right:312.9px;top:177.55px">No</p>
<p class="v" style="right:219.1px;top:177.55px">No</p>
<p class="v" style="right:125.4px;top:177.55px">No</p>
<svg width="14.4" height="14.4" style="left:44.5px;top:198.6px"><use href="#ck"/></svg>
<p class="l" style="left:62.0px;top:197.08px">E-core 7 Critical Temperature</p>
<p class="v" style="right:312.9px;top:197.08px">No</p>
<p class="v" style="right:219.1px;top:197.08px">No</p>
<p class="v" style="right:125.4px;top:197.08px">No</p>
<svg width="14.4" height="14.4" style="left:44.5px;top:218.1px"><use href="#ck"/></svg>
<p class="l" style="left:62.0px;top:216.61px">E-core 8 Critical Temperature</p>
<p class="v" style="right:312.9px;top:216.61px">No</p>
<p class="v" style="right:219.1px;top:216.61px">No</p>
<p class="v" style="right:125.4px;top:216.61px">No</p>
<svg width="14.4" height="14.4" style="left:44.5px;top:237.6px"><use href="#ck"/></svg>
<p class="l" style="left:62.0px;top:236.14px">E-core 9 Critical Temperature</p>
<p class="v" style="right:312.9px;top:236.14px">No</p>
<p class="v" style="right:219.1px;top:236.14px">No</p>
<p class="v" style="right:125.4px;top:236.14px">No</p>
<svg width="14.4" height="14.4" style="left:44.5px;top:257.2px"><use href="#ck"/></svg>
<p class="l" style="left:62.0px;top:255.68px">E-core 10 Critical Temperature</p>
<p class="v" style="right:312.9px;top:255.68px">No</p>
<p class="v" style="right:219.1px;top:255.68px">No</p>
<p class="v" style="right:125.4px;top:255.68px">No</p>
<svg width="14.4" height="14.4" style="left:44.5px;top:276.7px"><use href="#ck"/></svg>
<p class="l" style="left:62.0px;top:275.21px">E-core 11 Critical Temperature</p>
<p class="v" style="right:312.9px;top:275.21px">No</p>
<p class="v" style="right:219.1px;top:275.21px">No</p>
<p class="v" style="right:125.4px;top:275.21px">No</p>
<svg width="10.8" height="7.5" style="left:25.7px;top:299.9px"><use href="#cd"/></svg>
<svg width="14.4" height="14.4" style="left:44.5px;top:296.2px"><use href="#ck"/></svg>
<p class="l" style="left:62.0px;top:294.74px">Core Power Limit Exceeded</p>
<p class="v" style="right:312.9px;top:294.74px">Yes</p>
<p class="v" style="right:219.1px;top:294.74px">No</p>
<p class="v" style="right:125.4px;top:294.74px">Yes</p>
<svg width="14.4" height="14.4" style="left:44.5px;top:315.8px"><use href="#ck"/></svg>
<p class="l" style="left:62.0px;top:314.27px">P-core 0 Power Limit Exceeded</p>
<p class="v" style="right:312.9px;top:314.27px">Yes</p>
<p class="v" style="right:219.1px;top:314.27px">No</p>
<p class="v" style="right:125.4px;top:314.27px">Yes</p>
<svg width="14.4" height="14.4" style="left:44.5px;top:335.3px"><use href="#ck"/></svg>
<p class="l" style="left:62.0px;top:333.80px">P-core 1 Power Limit Exceeded</p>
<p class="v" style="right:312.9px;top:333.80px">Yes</p>
<p class="v" style="right:219.1px;top:333.80px">No</p>
<p class="v" style="right:125.4px;top:333.80px">Yes</p>
<svg width="14.4" height="14.4" style="left:44.5px;top:354.8px"><use href="#ck"/></svg>
<p class="l" style="left:62.0px;top:353.33px">P-core 2 Power Limit Exceeded</p>
<p class="v" style="right:312.9px;top:353.33px">Yes</p>
<p class="v" style="right:219.1px;top:353.33px">No</p>
<p class="v" style="right:125.4px;top:353.33px">Yes</p>
<svg width="14.4" height="14.4" style="left:44.5px;top:374.4px"><use href="#ck"/></svg>
<p class="l" style="left:62.0px;top:372.86px">P-core 3 Power Limit Exceeded</p>
<p class="v" style="right:312.9px;top:372.86px">Yes</p>
<p class="v" style="right:219.1px;top:372.86px">No</p>
<p class="v" style="right:125.4px;top:372.86px">Yes</p>
<svg width="14.4" height="14.4" style="left:44.5px;top:393.9px"><use href="#ck"/></svg>
<p class="l" style="left:62.0px;top:392.39px">E-core 4 Power Limit Exceeded</p>
<p class="v" style="right:312.9px;top:392.39px">Yes</p>
<p class="v" style="right:219.1px;top:392.39px">No</p>
<p class="v" style="right:125.4px;top:392.39px">Yes</p>
<svg width="14.4" height="14.4" style="left:44.5px;top:413.4px"><use href="#ck"/></svg>
<p class="l" style="left:62.0px;top:411.93px">E-core 5 Power Limit Exceeded</p>
<p class="v" style="right:312.9px;top:411.93px">Yes</p>
<p class="v" style="right:219.1px;top:411.93px">No</p>
<p class="v" style="right:125.4px;top:411.93px">Yes</p>
<svg width="14.4" height="14.4" style="left:44.5px;top:433.0px"><use href="#ck"/></svg>
<p class="l" style="left:62.0px;top:431.46px">E-core 6 Power Limit Exceeded</p>
<p class="v" style="right:312.9px;top:431.46px">Yes</p>
<p class="v" style="right:219.1px;top:431.46px">No</p>
<p class="v" style="right:125.4px;top:431.46px">Yes</p>
<svg width="14.4" height="14.4" style="left:44.5px;top:452.5px"><use href="#ck"/></svg>
<p class="l" style="left:62.0px;top:450.99px">E-core 7 Power Limit Exceeded</p>
<p class="v" style="right:312.9px;top:450.99px">Yes</p>
<p class="v" style="right:219.1px;top:450.99px">No</p>
<p class="v" style="right:125.4px;top:450.99px">Yes</p>
<svg width="14.4" height="14.4" style="left:44.5px;top:472.0px"><use href="#ck"/></svg>
<p class="l" style="left:62.0px;top:470.52px">E-core 8 Power Limit Exceeded</p>
<p class="v" style="right:312.9px;top:470.52px">Yes</p>
<p class="v" style="right:219.1px;top:470.52px">No</p>
<p class="v" style="right:125.4px;top:470.52px">Yes</p>
<svg width="14.4" height="14.4" style="left:44.5px;top:491.6px"><use href="#ck"/></svg>
<p class="l" style="left:62.0px;top:490.05px">E-core 9 Power Limit Exceeded</p>
<p class="v" style="right:312.9px;top:490.05px">Yes</p>
<p class="v" style="right:219.1px;top:490.05px">No</p>
<p class="v" style="right:125.4px;top:490.05px">Yes</p>
<svg width="14.4" height="14.4" style="left:44.5px;top:511.1px"><use href="#ck"/></svg>
<p class="l" style="left:62.0px;top:509.58px">E-core 10 Power Limit Exceeded</p>
<p class="v" style="right:312.9px;top:509.58px">Yes</p>
<p class="v" style="right:219.1px;top:509.58px">No</p>
<p class="v" style="right:125.4px;top:509.58px">Yes</p>
<svg width="14.4" height="14.4" style="left:44.5px;top:530.6px"><use href="#ck"/></svg>
<p class="l" style="left:62.0px;top:529.11px">E-core 11 Power Limit Exceeded</p>
<p class="v" style="right:312.9px;top:529.11px">Yes</p>
<p class="v" style="right:219.1px;top:529.11px">No</p>
<p class="v" style="right:125.4px;top:529.11px">Yes</p>
<svg width="14.4" height="14.4" style="left:26.0px;top:550.1px"><use href="#ck"/></svg>
<p class="l" style="left:43.3px;top:548.64px">Package/Ring Thermal Throttling</p>
<p class="v r" style="right:312.9px;top:548.64px">Yes</p>
<p class="v" style="right:219.1px;top:548.64px">No</p>
<p class="v r" style="right:125.4px;top:548.64px">Yes</p>
<svg width="14.4" height="14.4" style="left:26.0px;top:569.7px"><use href="#ck"/></svg>
<p class="l" style="left:43.3px;top:568.17px">Package/Ring Critical Temperature</p>
<p class="v" style="right:312.9px;top:568.17px">No</p>
<p class="v" style="right:219.1px;top:568.17px">No</p>
<p class="v" style="right:125.4px;top:568.17px">No</p>
<svg width="14.4" height="14.4" style="left:26.0px;top:589.2px"><use href="#ck"/></svg>
<p class="l" style="left:43.3px;top:587.71px">Package/Ring Power Limit Exceeded</p>
<p class="v" style="right:312.9px;top:587.71px">Yes</p>
<p class="v" style="right:219.1px;top:587.71px">No</p>
<p class="v" style="right:125.4px;top:587.71px">Yes</p>
<svg width="10.8" height="7.5" style="left:6.6px;top:632.0px"><use href="#cd"/></svg>
<svg width="13.8" height="15.8" style="left:26.4px;top:627.4px"><use href="#ch"/></svg>
<p class="l it" style="left:44.2px;top:626.77px">CPU [#0]: Intel Core i7-1260P: Enhanced</p>
<svg width="6" height="16" style="left:30.2px;top:647.5px"><use href="#th"/></svg>
<p class="l" style="left:43.3px;top:646.30px">CPU Package Temperature</p>
<p class="v" style="right:312.9px;top:646.30px">83 °C</p>
<p class="v" style="right:219.1px;top:646.30px">53 °C</p>
<p class="v" style="right:125.4px;top:646.30px">86 °C</p>
<p class="v" style="right:31.6px;top:646.30px">83 °C</p>
<svg width="6" height="16" style="left:30.2px;top:667.0px"><use href="#th"/></svg>
<p class="l" style="left:43.3px;top:665.83px">CPU IA Cores</p>
<p class="v" style="right:312.9px;top:665.83px">83 °C</p>
<p class="v" style="right:219.1px;top:665.83px">53 °C</p>
<p class="v" style="right:125.4px;top:665.83px">86 °C</p>
<p class="v" style="right:31.6px;top:665.83px">83 °C</p>
<svg width="6" height="16" style="left:30.2px;top:686.6px"><use href="#th"/></svg>
<p class="l" style="left:43.3px;top:685.36px">CPU GT Cores (Graphics)</p>
<p class="v" style="right:312.9px;top:685.36px">61 °C</p>
<p class="v" style="right:219.1px;top:685.36px">42 °C</p>
<p class="v" style="right:125.4px;top:685.36px">61 °C</p>
<p class="v" style="right:31.6px;top:685.36px">59 °C</p>
<svg width="9.6" height="18" style="left:28.4px;top:704.2px"><use href="#bo"/></svg>
<p class="l" style="left:43.3px;top:704.89px">iGPU VID</p>
<p class="v" style="right:312.9px;top:704.89px">0.237 V</p>
<p class="v" style="right:219.1px;top:704.89px">0.230 V</p>
<p class="v" style="right:125.4px;top:704.89px">0.250 V</p>
<p class="v" style="right:31.6px;top:704.89px">0.239 V</p>
<svg width="7" height="10" style="left:27.0px;top:728.3px"><use href="#cr"/></svg>
<svg width="9.6" height="18" style="left:46.9px;top:723.7px"><use href="#bo"/></svg>
<p class="l" style="left:62.0px;top:724.42px">Voltage Offsets</p>
<p class="v" style="right:219.1px;top:724.42px">0.000 V</p>
<p class="v" style="right:125.4px;top:724.42px">0.000 V</p>
<svg width="9.6" height="18" style="left:28.4px;top:743.3px"><use href="#bo"/></svg>
<p class="l" style="left:43.3px;top:743.96px">VDDQ TX Voltage</p>
<p class="v" style="right:312.9px;top:743.96px">0.800 V</p>
<p class="v" style="right:219.1px;top:743.96px">0.800 V</p>
<p class="v" style="right:125.4px;top:743.96px">0.800 V</p>
<p class="v" style="right:31.6px;top:743.96px">0.800 V</p>
<svg width="9.6" height="18" style="left:28.4px;top:762.8px"><use href="#bo"/></svg>
<p class="l" style="left:43.3px;top:763.49px">CPU Package Power</p>
<p class="v" style="right:312.9px;top:763.49px">27.935 W</p>
<p class="v" style="right:219.1px;top:763.49px">4.736 W</p>
<p class="v" style="right:125.4px;top:763.49px">35.003 W</p>
<p class="v" style="right:31.6px;top:763.49px">28.029 W</p>
<svg width="9.6" height="18" style="left:28.4px;top:782.3px"><use href="#bo"/></svg>
<p class="l" style="left:43.3px;top:783.02px">IA Cores Power</p>
<p class="v" style="right:312.9px;top:783.02px">23.895 W</p>
<p class="v" style="right:219.1px;top:783.02px">1.240 W</p>
<p class="v" style="right:125.4px;top:783.02px">30.995 W</p>
<p class="v" style="right:31.6px;top:783.02px">23.996 W</p>
<svg width="9.6" height="18" style="left:28.4px;top:801.8px"><use href="#bo"/></svg>
<p class="l" style="left:43.3px;top:802.55px">GT Cores Power</p>
<p class="v" style="right:312.9px;top:802.55px">0.006 W</p>
<p class="v" style="right:219.1px;top:802.55px">0.005 W</p>
<p class="v" style="right:125.4px;top:802.55px">0.111 W</p>
<p class="v" style="right:31.6px;top:802.55px">0.007 W</p>
<svg width="9.6" height="18" style="left:28.4px;top:821.4px"><use href="#bo"/></svg>
<p class="l" style="left:43.3px;top:822.08px">Total System Power</p>
<p class="v" style="right:312.9px;top:822.08px">0.324 W</p>
<p class="v" style="right:219.1px;top:822.08px">0.271 W</p>
<p class="v" style="right:125.4px;top:822.08px">0.325 W</p>
<p class="v" style="right:31.6px;top:822.08px">0.324 W</p>
<svg width="9.6" height="18" style="left:28.4px;top:840.9px"><use href="#bo"/></svg>
<p class="l" style="left:43.3px;top:841.61px">System Agent Power</p>
<p class="v" style="right:312.9px;top:841.61px">3.243 W</p>
<p class="v" style="right:219.1px;top:841.61px">2.925 W</p>
<p class="v" style="right:125.4px;top:841.61px">3.748 W</p>
<p class="v" style="right:31.6px;top:841.61px">3.244 W</p>
<svg width="9.6" height="18" style="left:28.4px;top:860.4px"><use href="#bo"/></svg>
<p class="l" style="left:43.3px;top:861.14px">Rest-of-Chip Power</p>
<p class="v" style="right:312.9px;top:861.14px">0.245 W</p>
<p class="v" style="right:219.1px;top:861.14px">0.228 W</p>
<p class="v" style="right:125.4px;top:861.14px">0.308 W</p>
<p class="v" style="right:31.6px;top:861.14px">0.245 W</p>
<svg width="9.6" height="18" style="left:28.4px;top:880.0px"><use href="#bo"/></svg>
<p class="l" style="left:43.3px;top:880.67px">PCH Power</p>
<p class="v" style="right:312.9px;top:880.67px">0.176 W</p>
<p class="v" style="right:219.1px;top:880.67px">0.056 W</p>
<p class="v" style="right:125.4px;top:880.67px">0.177 W</p>
<p class="v" style="right:31.6px;top:880.67px">0.170 W</p>
<svg width="9.6" height="18" style="left:28.4px;top:899.5px"><use href="#bo"/></svg>
<p class="l" style="left:43.3px;top:900.21px">PL1 Power Limit (Static)</p>
<p class="v" style="right:312.9px;top:900.21px">28.0 W</p>
<p class="v" style="right:219.1px;top:900.21px">28.0 W</p>
<p class="v" style="right:125.4px;top:900.21px">28.0 W</p>
<p class="v" style="right:31.6px;top:900.21px">28.0 W</p>
<svg width="9.6" height="18" style="left:28.4px;top:919.0px"><use href="#bo"/></svg>
<p class="l" style="left:43.3px;top:919.74px">PL1 Power Limit (Dynamic)</p>
<p class="v" style="right:312.9px;top:919.74px">28.0 W</p>
<p class="v" style="right:219.1px;top:919.74px">22.0 W</p>
<p class="v" style="right:125.4px;top:919.74px">28.0 W</p>
<p class="v" style="right:31.6px;top:919.74px">27.8 W</p>
<svg width="9.6" height="18" style="left:28.4px;top:938.6px"><use href="#bo"/></svg>
<p class="l" style="left:43.3px;top:939.27px">PL2 Power Limit (Static)</p>
<p class="v" style="right:312.9px;top:939.27px">35.0 W</p>
<p class="v" style="right:219.1px;top:939.27px">35.0 W</p>
<p class="v" style="right:125.4px;top:939.27px">35.0 W</p>
<p class="v" style="right:31.6px;top:939.27px">35.0 W</p>
<svg width="9.6" height="18" style="left:28.4px;top:958.1px"><use href="#bo"/></svg>
<p class="l" style="left:43.3px;top:958.80px">PL2 Power Limit (Dynamic)</p>
<p class="v" style="right:312.9px;top:958.80px">45.0 W</p>
<p class="v" style="right:219.1px;top:958.80px">45.0 W</p>
<p class="v" style="right:125.4px;top:958.80px">45.0 W</p>
<p class="v" style="right:31.6px;top:958.80px">45.0 W</p>
<svg width="14.4" height="14.4" style="left:26.0px;top:979.8px"><use href="#ck"/></svg>
<p class="l" style="left:43.3px;top:978.33px">GPU Clock</p>
<p class="v" style="right:312.9px;top:978.33px">300.0 MHz</p>
<p class="v" style="right:219.1px;top:978.33px">300.0 MHz</p>
<p class="v" style="right:125.4px;top:978.33px">300.0 MHz</p>
<p class="v" style="right:31.6px;top:978.33px">300.0 MHz</p>
<svg width="14.4" height="14.4" style="left:26.0px;top:999.4px"><use href="#ck"/></svg>
<p class="l" style="left:43.3px;top:997.86px">GPU D3D Usage</p>
<p class="v" style="right:312.9px;top:997.86px">1.8 %</p>
<p class="v" style="right:219.1px;top:997.86px">1.1 %</p>
<p class="v" style="right:125.4px;top:997.86px">7.4 %</p>
<p class="v" style="right:31.6px;top:997.86px">1.3 %</p>
<svg width="7" height="10" style="left:27.0px;top:1021.3px"><use href="#cr"/></svg>
<svg width="14.4" height="14.4" style="left:44.5px;top:1018.9px"><use href="#ck"/></svg>
<p class="l" style="left:62.0px;top:1017.39px">GPU D3D Utilizations</p>
<p class="v" style="right:219.1px;top:1017.39px">0.0 %</p>
<p class="v" style="right:125.4px;top:1017.39px">0.0 %</p>
<svg width="14.4" height="14.4" style="left:26.0px;top:1038.4px"><use href="#ck"/></svg>
<p class="l" style="left:43.3px;top:1036.92px">GPU D3D Memory Dynamic</p>
<p class="v" style="right:312.9px;top:1036.92px">666 MB</p>
<p class="v" style="right:219.1px;top:1036.92px">579 MB</p>
<p class="v" style="right:125.4px;top:1036.92px">666 MB</p>
<p class="v" style="right:31.6px;top:1036.92px">584 MB</p>
<svg width="14.4" height="14.4" style="left:26.0px;top:1058.0px"><use href="#ck"/></svg>
<p class="l" style="left:43.3px;top:1056.46px">Current cTDP Level</p>
<p class="v" style="right:312.9px;top:1056.46px">0 </p>
<p class="v" style="right:219.1px;top:1056.46px">0 </p>
<p class="v" style="right:125.4px;top:1056.46px">0 </p>
<p class="v" style="right:31.6px;top:1056.46px">0 </p>
<svg width="14.4" height="14.4" style="left:26.0px;top:1077.5px"><use href="#ck"/></svg>
<p class="l" style="left:43.3px;top:1075.99px">Package C10 Residency</p>
<p class="v" style="right:312.9px;top:1075.99px">0.0 %</p>
<p class="v" style="right:219.1px;top:1075.99px">0.0 %</p>
<p class="v" style="right:125.4px;top:1075.99px">0.0 %</p>
<p class="v" style="right:31.6px;top:1075.99px">0.0 %</p>
<svg width="10.8" height="7.5" style="left:6.6px;top:1120.2px"><use href="#cd"/></svg>
<svg width="13.8" height="15.8" style="left:26.4px;top:1115.6px"><use href="#ch"/></svg>
<p class="l it" style="left:44.2px;top:1115.05px">Memory Timings</p>
<svg width="14.4" height="14.4" style="left:26.0px;top:1136.1px"><use href="#ck"/></svg>
<p class="l" style="left:43.3px;top:1134.58px">Memory Clock</p>
<p class="v" style="right:312.9px;top:1134.58px">2,394.1 MHz</p>
<p class="v" style="right:219.1px;top:1134.58px">2,393.5 MHz</p>
<p class="v" style="right:125.4px;top:1134.58px">2,394.7 MHz</p>
<p class="v" style="right:31.6px;top:1134.58px">2,394.2 MHz</p>
<svg width="10.8" height="7.5" style="left:6.6px;top:1178.8px"><use href="#cd"/></svg>
<svg width="13.8" height="15.8" style="left:26.4px;top:1174.2px"><use href="#ch"/></svg>
<p class="l it" style="left:44.2px;top:1173.64px">CPU [#0]: Intel Core i7-1260P: Performa...</p>
<svg width="7" height="10" style="left:27.0px;top:1197.1px"><use href="#cr"/></svg>
<svg width="14.4" height="14.4" style="left:44.5px;top:1194.7px"><use href="#ck"/></svg>
<p class="l" style="left:62.0px;top:1193.17px">IA Limit Reasons</p>
<p class="v" style="right:312.9px;top:1193.17px">Yes</p>
<p class="v" style="right:219.1px;top:1193.17px">No</p>
<p class="v" style="right:125.4px;top:1193.17px">Yes</p>
<svg width="7" height="10" style="left:27.0px;top:1216.6px"><use href="#cr"/></svg>
<svg width="14.4" height="14.4" style="left:44.5px;top:1214.2px"><use href="#ck"/></svg>
<p class="l" style="left:62.0px;top:1212.71px">GT Limit Reasons</p>
<p class="v" style="right:312.9px;top:1212.71px">No</p>
<p class="v" style="right:219.1px;top:1212.71px">No</p>
<p class="v" style="right:125.4px;top:1212.71px">Yes</p>
<svg width="7" height="10" style="left:27.0px;top:1236.1px"><use href="#cr"/></svg>
<svg width="14.4" height="14.4" style="left:44.5px;top:1233.7px"><use href="#ck"/></svg>
<p class="l" style="left:62.0px;top:1232.24px">Ring Limit Reasons</p>
<p class="v" style="right:312.9px;top:1232.24px">Yes</p>
<p class="v" style="right:219.1px;top:1232.24px">No</p>
<p class="v" style="right:125.4px;top:1232.24px">Yes</p>
<svg width="10.8" height="7.5" style="left:6.6px;top:1276.5px"><use href="#cd"/></svg>
<svg width="13.8" height="15.8" style="left:26.4px;top:1271.9px"><use href="#ch"/></svg>
<p class="l it" style="left:44.2px;top:1271.30px">S.M.A.R.T.: FORESEE XP2100F001T (NE...</p>
<svg width="6" height="16" style="left:30.2px;top:1292.0px"><use href="#th"/></svg>
<p class="l" style="left:43.3px;top:1290.83px">Drive Temperature</p>
<p class="v" style="right:312.9px;top:1290.83px">34 °C</p>
<p class="v" style="right:219.1px;top:1290.83px">31 °C</p>
<p class="v" style="right:125.4px;top:1290.83px">34 °C</p>
<p class="v" style="right:31.6px;top:1290.83px">33 °C</p>
</div>
<b style="left:1383.7px;top:34.8px;width:2.1px;height:1588.6000000000001px;background:#747474"></b>
<div class="btn" style="left:3.0px;top:1632.3px;width:48.4px;height:41.7px"></div>
<div class="btn" style="left:53.4px;top:1632.3px;width:49.1px;height:41.7px"></div>
<div class="btn" style="left:1030.4px;top:1632.3px;width:49.0px;height:41.7px"></div>
<div class="btn" style="left:1160.2px;top:1632.3px;width:48.9px;height:41.7px"></div>
<div class="btn" style="left:1213.8px;top:1632.3px;width:48.4px;height:41.7px"></div>
<div class="btn" style="left:1267.3px;top:1632.3px;width:49.0px;height:41.7px"></div>
<div class="btn" style="left:1322.1px;top:1632.3px;width:48.4px;height:41.7px"></div>
<svg width="37.4" height="20.4" style="left:7.9px;top:1644.3px" viewBox="0 0 37.4 20"><path d="M0 10 L9 0 L9 5.8 L17 5.8 L17 14.2 L9 14.2 L9 20 Z" fill="#3494e3" stroke="#2a84d2" stroke-width=".4"/><g transform="translate(37.4,0) scale(-1,1)"><path d="M0 10 L9 0 L9 5.8 L17 5.8 L17 14.2 L9 14.2 L9 20 Z" fill="#3494e3" stroke="#2a84d2" stroke-width=".4"/></g></svg>
<svg width="34.8" height="20.4" style="left:59.7px;top:1644.3px" viewBox="0 0 34.8 20"><g transform="translate(17.1,0) scale(-1,1)"><path d="M0 10 L9 0 L9 5.8 L17 5.8 L17 14.2 L9 14.2 L9 20 Z" fill="#3494e3" stroke="#2a84d2" stroke-width=".4"/></g><g transform="translate(17.7,0)"><path d="M0 10 L9 0 L9 5.8 L17 5.8 L17 14.2 L9 14.2 L9 20 Z" fill="#3494e3" stroke="#2a84d2" stroke-width=".4"/></g></svg>
<svg width="40" height="38" style="left:1034.5px;top:1633.6px" viewBox="0 0 40 38">
<defs><linearGradient id="mon" x1="0" y1="0" x2="1" y2="1"><stop offset="0" stop-color="#8fd0ff"/><stop offset=".5" stop-color="#1878d8"/><stop offset="1" stop-color="#0a4aa8"/></linearGradient></defs>
<path d="M19 10 H29 V22" fill="none" stroke="#b8b8b8" stroke-width="1.6"/>
<g><path d="M2.5 2.5 L18.5 1 L17 13.5 L4.5 14.5 Z" fill="url(#mon)" stroke="#4a5a6a" stroke-width="1"/><path d="M8 15 h6 l1 3 h-8z" fill="#9a9a9a"/><ellipse cx="11.5" cy="19" rx="6" ry="1.8" fill="#8a8a8a"/></g>
<g transform="translate(18.5,15.5)"><path d="M2.5 2.5 L18.5 1 L17 13.5 L4.5 14.5 Z" fill="url(#mon)" stroke="#4a5a6a" stroke-width="1"/><path d="M8 15 h6 l1 3 h-8z" fill="#9a9a9a"/><ellipse cx="11.5" cy="19" rx="6" ry="1.8" fill="#8a8a8a"/></g>
</svg>
<p style="left:1109.2px;top:1640.6px;font-size:13.6px;line-height:20px;white-space:pre;transform:scaleX(.94);transform-origin:0 0">0:20:39</p>
<svg width="38.8" height="38.8" style="left:1165.0px;top:1633.8px" viewBox="-20 -20 40 40"><circle r="18.2" fill="#fff" stroke="#111" stroke-width="1.1"/><path d="M0 -16.2 V-11.6" transform="rotate(0)" stroke="#111" stroke-width="1.1"/><path d="M0 -16.2 V-13.0" transform="rotate(30)" stroke="#111" stroke-width="1.1"/><path d="M0 -16.2 V-13.0" transform="rotate(60)" stroke="#111" stroke-width="1.1"/><path d="M0 -16.2 V-11.6" transform="rotate(90)" stroke="#111" stroke-width="1.1"/><path d="M0 -16.2 V-13.0" transform="rotate(120)" stroke="#111" stroke-width="1.1"/><path d="M0 -16.2 V-13.0" transform="rotate(150)" stroke="#111" stroke-width="1.1"/><path d="M0 -16.2 V-11.6" transform="rotate(180)" stroke="#111" stroke-width="1.1"/><path d="M0 -16.2 V-13.0" transform="rotate(210)" stroke="#111" stroke-width="1.1"/><path d="M0 -16.2 V-13.0" transform="rotate(240)" stroke="#111" stroke-width="1.1"/><path d="M0 -16.2 V-11.6" transform="rotate(270)" stroke="#111" stroke-width="1.1"/><path d="M0 -16.2 V-13.0" transform="rotate(300)" stroke="#111" stroke-width="1.1"/><path d="M0 -16.2 V-13.0" transform="rotate(330)" stroke="#111" stroke-width="1.1"/><path d="M0 1 V-15.5" stroke="#111" stroke-width="1.3"/><path d="M-1 0 H9.5" stroke="#111" stroke-width="2"/><circle r="1.6" fill="#111"/></svg>
<svg width="36" height="38" style="left:1221.0px;top:1634.0px" viewBox="0 0 36 38">
<path d="M3.5 2.5 H22 L27.5 8 V33 H3.5 Z" fill="#f2f2f2" stroke="#b4b4b4" stroke-width="1"/><path d="M22 2.5 V8 H27.5" fill="#dcdcdc" stroke="#b4b4b4" stroke-width=".8"/>
<path d="M7 11h17M7 14.5h17M7 18h17M7 21.5h17M7 25h12M7 28.5h12M12.5 9v21M18.5 9v21" stroke="#c8c8c8" stroke-width=".9" fill="none"/>
<ellipse cx="15" cy="34" rx="14" ry="1.6" fill="#000" opacity=".12"/>
<path d="M24.2 21.3h4.8v5h5v4.8h-5v5h-4.8v-5h-5v-4.8h5z" fill="#9ccc4a" stroke="#86b832" stroke-width=".8"/></svg>
<svg width="38" height="38" style="left:1272.6px;top:1634.6px" viewBox="-19.5 -19.5 39 39"><defs><linearGradient id="gr" gradientUnits="userSpaceOnUse" x1="0" y1="-19" x2="0" y2="19"><stop offset="0" stop-color="#ececec"/><stop offset="1" stop-color="#a2a2a2"/></linearGradient></defs><path d="M-4.6 -12 L-3.4 -17.6 Q-3.2 -18.4 -2.4 -18.4 H2.4 Q3.2 -18.4 3.4 -17.6 L4.6 -12 Z" transform="rotate(22.5)" fill="#c6c6c6" stroke="#9e9e9e" stroke-width=".6"/><path d="M-4.6 -12 L-3.4 -17.6 Q-3.2 -18.4 -2.4 -18.4 H2.4 Q3.2 -18.4 3.4 -17.6 L4.6 -12 Z" transform="rotate(67.5)" fill="#c6c6c6" stroke="#9e9e9e" stroke-width=".6"/><path d="M-4.6 -12 L-3.4 -17.6 Q-3.2 -18.4 -2.4 -18.4 H2.4 Q3.2 -18.4 3.4 -17.6 L4.6 -12 Z" transform="rotate(112.5)" fill="#c6c6c6" stroke="#9e9e9e" stroke-width=".6"/><path d="M-4.6 -12 L-3.4 -17.6 Q-3.2 -18.4 -2.4 -18.4 H2.4 Q3.2 -18.4 3.4 -17.6 L4.6 -12 Z" transform="rotate(157.5)" fill="#c6c6c6" stroke="#9e9e9e" stroke-width=".6"/><path d="M-4.6 -12 L-3.4 -17.6 Q-3.2 -18.4 -2.4 -18.4 H2.4 Q3.2 -18.4 3.4 -17.6 L4.6 -12 Z" transform="rotate(202.5)" fill="#c6c6c6" stroke="#9e9e9e" stroke-width=".6"/><path d="M-4.6 -12 L-3.4 -17.6 Q-3.2 -18.4 -2.4 -18.4 H2.4 Q3.2 -18.4 3.4 -17.6 L4.6 -12 Z" transform="rotate(247.5)" fill="#c6c6c6" stroke="#9e9e9e" stroke-width=".6"/><path d="M-4.6 -12 L-3.4 -17.6 Q-3.2 -18.4 -2.4 -18.4 H2.4 Q3.2 -18.4 3.4 -17.6 L4.6 -12 Z" transform="rotate(292.5)" fill="#c6c6c6" stroke="#9e9e9e" stroke-width=".6"/><path d="M-4.6 -12 L-3.4 -17.6 Q-3.2 -18.4 -2.4 -18.4 H2.4 Q3.2 -18.4 3.4 -17.6 L4.6 -12 Z" transform="rotate(337.5)" fill="#c6c6c6" stroke="#9e9e9e" stroke-width=".6"/><circle r="13.6" fill="url(#gr)" stroke="#a6a6a6" stroke-width=".5"/><circle r="9.2" fill="#9a9a9a"/><circle r="8" fill="#c9c9c9"/><circle r="6.5" fill="#fbfbfb"/></svg>
<svg width="31" height="31" style="left:1331.0px;top:1638.0px" viewBox="0 0 32 32"><defs><linearGradient id="bx" x1="0" y1="0" x2="1" y2="1"><stop offset="0" stop-color="#1268a8"/><stop offset=".5" stop-color="#2f9be0"/><stop offset="1" stop-color="#3aa0e6"/></linearGradient></defs><path d="M8 2 L16 10 L24 2 L30 8 L22 16 L30 24 L24 30 L16 22 L8 30 L2 24 L10 16 L2 8 Z" fill="url(#bx)"/></svg>
</div><b class="wb"></b></div>
<div class="win" style="left:1384.9px;top:1.2px;width:1607.7px;height:233.4px">
<div class="tb" style="height:34px;"></div>
<svg width="17.2" height="17.2" style="left:9.8px;top:7.8px"><use href="#ap"/></svg>
<p class="tt" style="left:32.0px;top:6.8px">P-core 0 T0 Effective Clock</p>
<svg width="12" height="12" style="left:1581.3px;top:10.2px"><use href="#cx"/></svg>
<b style="left:0;top:33.3px;width:1510.7px;height:1.2px;background:#9a9a9a"></b>
<div class="ga" style="left:1.0px;top:34.5px;width:1509.1px;height:196.6px">
<svg width="1509.1" height="196.6" style="left:0;top:0" viewBox="0 0 1509.1 196.6"><path d="M41.0 198.6V185.9H45.6V190.7H51.4V128.1H53.5V16.0H66.3V17.3H68.6V20.8H71.1V23.2H75.1V24.8H78.3V26.9H79.7V32.3H80.7V51.0H84.3V47.7H94.0V44.9H96.4V42.5H102.1V41.5H107.1V40.1H110.1V38.7H117.1V36.9H119.7V35.1H126.1V34.8H134.2V35.6H138.7V35.3H144.4V35.5H152.1V34.9H155.3V35.7H160.9V35.6H163.9V35.3H171.3V35.0H179.9V35.8H183.1V34.8H189.4V35.9H194.6V35.1H200.2V34.9H204.5V35.3H210.5V35.1H214.9H220.6V35.2H223.8V35.8H230.1V35.6H234.2V36.0H242.4V35.1H247.4V35.7H254.6V36.0H260.2V35.9H267.2V35.3H273.7V36.0H281.8V35.6H288.3V35.1H292.8V35.9H298.3V35.2H304.6V35.8H311.6V35.5H317.2V35.6H324.9V35.7H330.3V35.6H333.4V35.2H340.7V36.2H347.2V35.6H351.2V35.7H360.1V36.0H366.4V36.1H370.8V35.7H379.5V35.8H385.2V35.5H391.5V36.3H394.6V36.1H402.5V36.2H409.9V36.1H416.0V35.9H421.6V35.3H429.8V35.9H434.0V35.9H439.9V35.7H445.0V35.9H451.7V36.0H457.5V35.4H461.9V35.5H468.4V36.3H476.2V36.3H484.1V35.7H492.1V36.2H495.6V35.4H498.7V36.3H503.2V35.6H509.9V35.8H513.4V35.6H519.5V35.6H524.2V36.3H529.9V35.8H535.7V35.5H541.1V36.0H545.2V35.6H553.6V36.1H557.8V36.2H565.7V35.6H568.8V35.7H576.2V35.8H583.4V36.3H589.7V35.8H598.5V36.5H604.6V35.9H611.5V36.1H618.0V36.0H624.7V35.7H629.5V36.7H637.8V36.0H645.9V36.1H654.6V36.5H660.1V36.0H663.1V36.7H666.3V36.7H675.1V36.4H679.2V36.7H688.0V36.6H694.0V36.2H699.1V36.0H706.2V36.3H710.3V36.0H717.3V36.2H723.3V36.2H731.6V36.9H734.7V36.1H739.6V37.0H747.3V36.3H751.6V36.7H759.6V37.0H764.7V36.9H771.8V36.5H780.7V36.2H788.1V36.1H792.1V37.0H796.4V36.8H803.0V36.9H808.2V36.4H812.9V37.0H819.6V37.1H827.9V36.2H834.2V36.2H837.4V36.2H845.6V37.0H853.6V36.5H860.3V37.0H865.6V36.8H869.9V36.2H874.5V37.1H880.9V37.2H886.6V36.5H894.4V37.1H897.4V36.9H901.0V36.3H909.3V36.3H913.7V37.3H919.3V36.4H923.3V36.5H930.7V36.4H939.2V36.7H948.0V37.3H952.8V36.6H958.6V36.4H965.5V36.4H968.6V37.4H973.4V37.0H979.1V36.7H982.5V37.4H991.3V37.4H994.9V36.6H1001.7V37.5H1007.9V37.2H1014.9V36.7H1021.1V36.8H1025.6V36.5H1030.3V37.5H1036.0V37.2H1042.8V37.5H1048.2V36.8H1053.2V36.9H1061.2V37.5H1066.1V36.9H1072.3V37.2H1078.9V36.8H1082.0H1085.4V37.2H1088.9V36.7H1095.7V36.9H1103.4V37.1H1111.6V36.8H1117.6V37.5H1121.1V37.7H1125.1V37.5H1134.0V37.6H1139.0V36.8H1145.0V37.7H1149.8V37.7H1153.7V37.7H1156.8V37.1H1165.3V37.6H1173.7V37.7H1181.2V37.5H1185.3V37.2H1189.2V37.6H1196.2V37.1H1199.6V37.8H1207.4V37.4H1213.7V37.8H1219.4V37.3H1224.4V37.1H1227.6V37.6H1233.1V37.5H1236.5V37.2H1240.3V37.0H1244.8V37.8H1250.2V37.3H1256.9V37.2H1260.0V37.5H1266.0V37.6H1271.6V37.7H1279.0V37.2H1284.9V37.5H1289.3V37.4H1295.7V38.0H1304.2V37.3H1311.0V37.1H1314.5V37.6H1322.7V37.2H1330.3V38.0H1335.2V37.8H1343.3V37.5H1350.5V37.9H1357.1V38.0H1365.5V38.2H1371.9V37.3H1376.4V37.4H1382.8V38.0H1386.1V37.9H1393.4V37.5H1399.5V37.4H1406.9V37.2H1415.8V38.1H1422.5V37.5H1431.0V38.3H1434.9V38.1H1442.9V38.0H1450.1V37.8H1458.7V38.4H1464.0V38.2H1469.5V37.5H1474.5V37.5H1483.0V38.4H1486.7V38.0H1492.1V37.5H1496.9V37.6H1504.4V37.4H1508.5V37.9H1509.1V198.6Z" fill="#9aff9e"/></svg>
<b class="gg" style="background-image:repeating-linear-gradient(to right,#b2ccf0 0,#b2ccf0 .95px,transparent .95px,transparent 15.625px),repeating-linear-gradient(to bottom,#b2ccf0 0,#b2ccf0 .95px,transparent .95px,transparent 15.625px);background-position:9.25px 0,0 8.20px"></b>
<svg width="1509.1" height="196.6" style="left:0;top:0" viewBox="0 0 1509.1 196.6"><path d="M41.0 185.9H45.6V190.7H51.4V128.1H53.5V16.0H66.3V17.3H68.6V20.8H71.1V23.2H75.1V24.8H78.3V26.9H79.7V32.3H80.7V51.0H84.3V47.7H94.0V44.9H96.4V42.5H102.1V41.5H107.1V40.1H110.1V38.7H117.1V36.9H119.7V35.1H126.1V34.8H134.2V35.6H138.7V35.3H144.4V35.5H152.1V34.9H155.3V35.7H160.9V35.6H163.9V35.3H171.3V35.0H179.9V35.8H183.1V34.8H189.4V35.9H194.6V35.1H200.2V34.9H204.5V35.3H210.5V35.1H214.9H220.6V35.2H223.8V35.8H230.1V35.6H234.2V36.0H242.4V35.1H247.4V35.7H254.6V36.0H260.2V35.9H267.2V35.3H273.7V36.0H281.8V35.6H288.3V35.1H292.8V35.9H298.3V35.2H304.6V35.8H311.6V35.5H317.2V35.6H324.9V35.7H330.3V35.6H333.4V35.2H340.7V36.2H347.2V35.6H351.2V35.7H360.1V36.0H366.4V36.1H370.8V35.7H379.5V35.8H385.2V35.5H391.5V36.3H394.6V36.1H402.5V36.2H409.9V36.1H416.0V35.9H421.6V35.3H429.8V35.9H434.0V35.9H439.9V35.7H445.0V35.9H451.7V36.0H457.5V35.4H461.9V35.5H468.4V36.3H476.2V36.3H484.1V35.7H492.1V36.2H495.6V35.4H498.7V36.3H503.2V35.6H509.9V35.8H513.4V35.6H519.5V35.6H524.2V36.3H529.9V35.8H535.7V35.5H541.1V36.0H545.2V35.6H553.6V36.1H557.8V36.2H565.7V35.6H568.8V35.7H576.2V35.8H583.4V36.3H589.7V35.8H598.5V36.5H604.6V35.9H611.5V36.1H618.0V36.0H624.7V35.7H629.5V36.7H637.8V36.0H645.9V36.1H654.6V36.5H660.1V36.0H663.1V36.7H666.3V36.7H675.1V36.4H679.2V36.7H688.0V36.6H694.0V36.2H699.1V36.0H706.2V36.3H710.3V36.0H717.3V36.2H723.3V36.2H731.6V36.9H734.7V36.1H739.6V37.0H747.3V36.3H751.6V36.7H759.6V37.0H764.7V36.9H771.8V36.5H780.7V36.2H788.1V36.1H792.1V37.0H796.4V36.8H803.0V36.9H808.2V36.4H812.9V37.0H819.6V37.1H827.9V36.2H834.2V36.2H837.4V36.2H845.6V37.0H853.6V36.5H860.3V37.0H865.6V36.8H869.9V36.2H874.5V37.1H880.9V37.2H886.6V36.5H894.4V37.1H897.4V36.9H901.0V36.3H909.3V36.3H913.7V37.3H919.3V36.4H923.3V36.5H930.7V36.4H939.2V36.7H948.0V37.3H952.8V36.6H958.6V36.4H965.5V36.4H968.6V37.4H973.4V37.0H979.1V36.7H982.5V37.4H991.3V37.4H994.9V36.6H1001.7V37.5H1007.9V37.2H1014.9V36.7H1021.1V36.8H1025.6V36.5H1030.3V37.5H1036.0V37.2H1042.8V37.5H1048.2V36.8H1053.2V36.9H1061.2V37.5H1066.1V36.9H1072.3V37.2H1078.9V36.8H1082.0H1085.4V37.2H1088.9V36.7H1095.7V36.9H1103.4V37.1H1111.6V36.8H1117.6V37.5H1121.1V37.7H1125.1V37.5H1134.0V37.6H1139.0V36.8H1145.0V37.7H1149.8V37.7H1153.7V37.7H1156.8V37.1H1165.3V37.6H1173.7V37.7H1181.2V37.5H1185.3V37.2H1189.2V37.6H1196.2V37.1H1199.6V37.8H1207.4V37.4H1213.7V37.8H1219.4V37.3H1224.4V37.1H1227.6V37.6H1233.1V37.5H1236.5V37.2H1240.3V37.0H1244.8V37.8H1250.2V37.3H1256.9V37.2H1260.0V37.5H1266.0V37.6H1271.6V37.7H1279.0V37.2H1284.9V37.5H1289.3V37.4H1295.7V38.0H1304.2V37.3H1311.0V37.1H1314.5V37.6H1322.7V37.2H1330.3V38.0H1335.2V37.8H1343.3V37.5H1350.5V37.9H1357.1V38.0H1365.5V38.2H1371.9V37.3H1376.4V37.4H1382.8V38.0H1386.1V37.9H1393.4V37.5H1399.5V37.4H1406.9V37.2H1415.8V38.1H1422.5V37.5H1431.0V38.3H1434.9V38.1H1442.9V38.0H1450.1V37.8H1458.7V38.4H1464.0V38.2H1469.5V37.5H1474.5V37.5H1483.0V38.4H1486.7V38.0H1492.1V37.5H1496.9V37.6H1504.4V37.4H1508.5V37.9H1509.1" fill="none" stroke="#0aee38" stroke-width="1.3" stroke-linejoin="round"/></svg>
<b style="left:0;top:0;width:16px;bottom:0;background:linear-gradient(to right,rgba(120,150,170,.20),rgba(120,150,170,0))"></b>
<b style="left:0;top:0;right:0;height:3px;background:linear-gradient(rgba(100,120,140,.25),rgba(100,120,140,0))"></b>
</div>
<div class="ed" style="left:1514.3px;top:33.4px;width:79.8px;height:20.6px"></div>
<p class="sb" style="left:1519.3px;top:35.4px">3000.0</p>
<i class="sq" style="left:1520.6px;top:113.3px;background:#00f73c"></i>
<i class="sq" style="left:1545.3px;top:113.3px;background:#e1f5fe"></i>
<i class="sq" style="left:1570.5px;top:113.3px;background:#a9c4e9"></i>
<div class="ed" style="left:1514.3px;top:134.0px;width:78px;height:19.8px"></div>
<p class="sb" style="left:1519.3px;top:135.9px">2,435.3 MHz</p>
<div class="btn" style="left:1514.5px;top:174.4px;width:44.9px;height:24.2px"></div>
<div class="btn" style="left:1561.5px;top:174.4px;width:33.8px;height:24.2px"></div>
<p class="sb" style="left:1518.5px;top:178.6px">Auto Fit</p>
<p class="sb" style="left:1565.3px;top:178.6px;transform:scaleX(.885)">Reset</p>
<div class="ed" style="left:1514.3px;top:211.0px;width:79.8px;height:20.4px"></div>
<p class="sb" style="left:1519.3px;top:213.0px">0.0</p>
<b class="wb"></b></div>
<div class="win" style="left:1384.9px;top:243.3px;width:1607.7px;height:233.4px">
<div class="tb" style="height:34px;"></div>
<svg width="17.2" height="17.2" style="left:9.8px;top:7.8px"><use href="#ap"/></svg>
<p class="tt" style="left:32.0px;top:6.8px">E-core 8 T0 Effective Clock</p>
<svg width="12" height="12" style="left:1581.3px;top:10.2px"><use href="#cx"/></svg>
<b style="left:0;top:33.3px;width:1510.7px;height:1.2px;background:#9a9a9a"></b>
<div class="ga" style="left:1.0px;top:34.5px;width:1509.1px;height:196.6px">
<svg width="1509.1" height="196.6" style="left:0;top:0" viewBox="0 0 1509.1 196.6"><path d="M41.0 198.6V195.8H51.4V108.3H53.5V48.7H64.1V48.1H69.1V49.0H72.3V52.5H78.8V62.1H80.7V79.4H84.1V78.8H90.1V77.2H94.1V75.0H99.1V73.6H106.1V71.8H114.1V70.2H117.6V68.6H123.1V68.6H131.8V67.9H135.3V68.5H142.7V68.4H147.6V68.4H154.2V68.3H158.2V68.2H163.5V68.4H172.5V68.6H178.7V68.2H183.4V67.9H186.5V68.2H191.4V68.2H199.8V68.3H206.1V68.1H209.3V68.1H213.1V68.3H222.1V68.4H226.2V68.6H234.0V68.5H242.4V68.5H250.2V68.2H259.0V68.6H263.0V68.5H270.3V68.2H276.5V68.3H285.0H293.0V68.2H301.3V68.6H307.1V68.3H315.6V68.4H321.5V68.0H326.5V68.4H330.5V68.6H335.1H339.9V68.6H347.2V68.3H353.3V68.4H359.8V68.1H364.0V68.3H372.7V68.4H376.1V68.5H383.5V68.6H387.6V68.5H391.0V68.4H395.6V68.1H403.9V68.0H410.0V68.6H414.5V68.0H422.7V68.2H430.0V67.9H435.2V68.0H442.3V67.9H451.0V67.9H458.4H462.9V68.5H466.8V68.0H474.0V68.2H477.2V68.7H481.2V67.9H486.2V68.4H493.7V68.0H498.7V67.9H504.4V68.5H511.8V68.6H519.4V68.6H526.6V68.2H530.9V68.4H535.8V68.0H541.5V68.6H545.3V68.3H550.7V68.3H554.5V68.6H559.1V68.4H564.6V67.9H570.9V68.0H574.3V67.9H578.2V67.9H585.1V68.3H594.0V68.6H602.9V68.1H608.6V68.1H615.1V68.4H622.9V68.4H627.5V68.2H633.6V67.9H636.8V68.2H640.5V68.4H645.0V67.9H649.1V68.1H653.4V68.3H659.1V68.1H666.0V68.0H674.4V68.6H681.8V68.2H687.9V68.3H691.2V68.2H697.3V68.0H700.9V68.5H706.1V68.3H714.6V68.4H719.4V68.7H724.6V67.9H731.7V68.0H736.5V68.5H743.6V67.9H749.3V68.2H755.2V68.0H761.7V67.9H766.4V68.2H775.0V67.9H782.6V68.0H789.0V68.2H794.8V68.5H800.2V68.0H803.9V67.9H812.0V68.4H820.7V68.4H823.9V68.4H831.6V68.4H837.5V68.2H843.3V68.5H847.9V68.3H853.8V68.6H861.6V68.6H869.6V68.1H874.0V68.3H878.6V68.2H885.6V68.6H892.1V68.5H895.7V68.2H904.7V68.0H910.2V67.9H913.7V68.6H922.7V68.4H926.4V68.1H930.8V68.4H937.9V68.2H944.0V68.0H950.3V68.6H957.8V67.9H963.9V68.4H968.5V68.6H974.2V68.4H979.7V68.7H987.4V68.3H991.2V68.2H994.4V68.3H1002.7V68.0H1008.8V68.3H1014.2V68.4H1022.8H1028.6V68.6H1033.6V68.5H1040.6V68.5H1048.7V68.0H1055.4V68.2H1062.4V68.7H1069.2V67.9H1075.0V68.4H1083.3V68.4H1091.2V67.9H1099.9V68.5H1106.5V68.6H1114.8V67.9H1122.7V68.5H1126.9V68.5H1133.4V68.0H1141.2V68.0H1147.9V68.2H1152.4V68.3H1158.2V68.0H1167.0V67.9H1170.1V68.3H1178.1V68.4H1185.6V68.3H1192.7V68.1H1197.3V68.3H1200.4V67.9H1208.0V68.0H1215.5V68.5H1220.9V68.4H1228.6V68.6H1232.4V68.0H1237.7V68.2H1242.5V67.9H1248.8V68.6H1254.0V68.3H1259.3V68.2H1267.5V68.1H1274.4V68.3H1280.7V68.6H1284.1V68.5H1288.9V68.4H1296.7H1302.1V68.5H1305.6V68.4H1311.0V68.3H1319.1V68.5H1325.9V68.1H1330.3V68.2H1334.7V68.1H1343.4V68.0H1351.3V68.2H1356.5V68.1H1360.0V68.2H1364.0V68.2H1368.7V68.6H1377.2V68.2H1384.1V68.6H1389.0V67.9H1393.5V68.0H1400.5V68.2H1405.7V68.5H1410.1V68.5H1416.9V68.2H1424.8V68.1H1433.1V68.6H1439.1V68.4H1447.8V68.5H1455.3V68.6H1463.9V68.5H1472.8V68.1H1479.5V68.4H1484.7V68.2H1488.8V68.6H1493.9V68.3H1502.3V68.0H1509.1V198.6Z" fill="#b2ffae"/></svg>
<b class="gg" style="background-image:repeating-linear-gradient(to right,#b2ccf0 0,#b2ccf0 .95px,transparent .95px,transparent 15.625px),repeating-linear-gradient(to bottom,#b2ccf0 0,#b2ccf0 .95px,transparent .95px,transparent 15.625px);background-position:9.25px 0,0 8.20px"></b>
<svg width="1509.1" height="196.6" style="left:0;top:0" viewBox="0 0 1509.1 196.6"><path d="M41.0 195.8H51.4V108.3H53.5V48.7H64.1V48.1H69.1V49.0H72.3V52.5H78.8V62.1H80.7V79.4H84.1V78.8H90.1V77.2H94.1V75.0H99.1V73.6H106.1V71.8H114.1V70.2H117.6V68.6H123.1V68.6H131.8V67.9H135.3V68.5H142.7V68.4H147.6V68.4H154.2V68.3H158.2V68.2H163.5V68.4H172.5V68.6H178.7V68.2H183.4V67.9H186.5V68.2H191.4V68.2H199.8V68.3H206.1V68.1H209.3V68.1H213.1V68.3H222.1V68.4H226.2V68.6H234.0V68.5H242.4V68.5H250.2V68.2H259.0V68.6H263.0V68.5H270.3V68.2H276.5V68.3H285.0H293.0V68.2H301.3V68.6H307.1V68.3H315.6V68.4H321.5V68.0H326.5V68.4H330.5V68.6H335.1H339.9V68.6H347.2V68.3H353.3V68.4H359.8V68.1H364.0V68.3H372.7V68.4H376.1V68.5H383.5V68.6H387.6V68.5H391.0V68.4H395.6V68.1H403.9V68.0H410.0V68.6H414.5V68.0H422.7V68.2H430.0V67.9H435.2V68.0H442.3V67.9H451.0V67.9H458.4H462.9V68.5H466.8V68.0H474.0V68.2H477.2V68.7H481.2V67.9H486.2V68.4H493.7V68.0H498.7V67.9H504.4V68.5H511.8V68.6H519.4V68.6H526.6V68.2H530.9V68.4H535.8V68.0H541.5V68.6H545.3V68.3H550.7V68.3H554.5V68.6H559.1V68.4H564.6V67.9H570.9V68.0H574.3V67.9H578.2V67.9H585.1V68.3H594.0V68.6H602.9V68.1H608.6V68.1H615.1V68.4H622.9V68.4H627.5V68.2H633.6V67.9H636.8V68.2H640.5V68.4H645.0V67.9H649.1V68.1H653.4V68.3H659.1V68.1H666.0V68.0H674.4V68.6H681.8V68.2H687.9V68.3H691.2V68.2H697.3V68.0H700.9V68.5H706.1V68.3H714.6V68.4H719.4V68.7H724.6V67.9H731.7V68.0H736.5V68.5H743.6V67.9H749.3V68.2H755.2V68.0H761.7V67.9H766.4V68.2H775.0V67.9H782.6V68.0H789.0V68.2H794.8V68.5H800.2V68.0H803.9V67.9H812.0V68.4H820.7V68.4H823.9V68.4H831.6V68.4H837.5V68.2H843.3V68.5H847.9V68.3H853.8V68.6H861.6V68.6H869.6V68.1H874.0V68.3H878.6V68.2H885.6V68.6H892.1V68.5H895.7V68.2H904.7V68.0H910.2V67.9H913.7V68.6H922.7V68.4H926.4V68.1H930.8V68.4H937.9V68.2H944.0V68.0H950.3V68.6H957.8V67.9H963.9V68.4H968.5V68.6H974.2V68.4H979.7V68.7H987.4V68.3H991.2V68.2H994.4V68.3H1002.7V68.0H1008.8V68.3H1014.2V68.4H1022.8H1028.6V68.6H1033.6V68.5H1040.6V68.5H1048.7V68.0H1055.4V68.2H1062.4V68.7H1069.2V67.9H1075.0V68.4H1083.3V68.4H1091.2V67.9H1099.9V68.5H1106.5V68.6H1114.8V67.9H1122.7V68.5H1126.9V68.5H1133.4V68.0H1141.2V68.0H1147.9V68.2H1152.4V68.3H1158.2V68.0H1167.0V67.9H1170.1V68.3H1178.1V68.4H1185.6V68.3H1192.7V68.1H1197.3V68.3H1200.4V67.9H1208.0V68.0H1215.5V68.5H1220.9V68.4H1228.6V68.6H1232.4V68.0H1237.7V68.2H1242.5V67.9H1248.8V68.6H1254.0V68.3H1259.3V68.2H1267.5V68.1H1274.4V68.3H1280.7V68.6H1284.1V68.5H1288.9V68.4H1296.7H1302.1V68.5H1305.6V68.4H1311.0V68.3H1319.1V68.5H1325.9V68.1H1330.3V68.2H1334.7V68.1H1343.4V68.0H1351.3V68.2H1356.5V68.1H1360.0V68.2H1364.0V68.2H1368.7V68.6H1377.2V68.2H1384.1V68.6H1389.0V67.9H1393.5V68.0H1400.5V68.2H1405.7V68.5H1410.1V68.5H1416.9V68.2H1424.8V68.1H1433.1V68.6H1439.1V68.4H1447.8V68.5H1455.3V68.6H1463.9V68.5H1472.8V68.1H1479.5V68.4H1484.7V68.2H1488.8V68.6H1493.9V68.3H1502.3V68.0H1509.1" fill="none" stroke="#8af08a" stroke-width="1.2" stroke-linejoin="round"/></svg>
<b style="left:0;top:0;width:16px;bottom:0;background:linear-gradient(to right,rgba(120,150,170,.20),rgba(120,150,170,0))"></b>
<b style="left:0;top:0;right:0;height:3px;background:linear-gradient(rgba(100,120,140,.25),rgba(100,120,140,0))"></b>
</div>
<div class="ed" style="left:1514.3px;top:33.4px;width:79.8px;height:20.6px"></div>
<p class="sb" style="left:1519.3px;top:35.4px">3000.0</p>
<i class="sq" style="left:1520.6px;top:113.3px;background:#80ff80"></i>
<i class="sq" style="left:1545.3px;top:113.3px;background:#e1f5fe"></i>
<i class="sq" style="left:1570.5px;top:113.3px;background:#a9c4e9"></i>
<div class="ed" style="left:1514.3px;top:134.0px;width:78px;height:19.8px"></div>
<p class="sb" style="left:1519.3px;top:135.9px">1,951.1 MHz</p>
<div class="btn" style="left:1514.5px;top:174.4px;width:44.9px;height:24.2px"></div>
<div class="btn" style="left:1561.5px;top:174.4px;width:33.8px;height:24.2px"></div>
<p class="sb" style="left:1518.5px;top:178.6px">Auto Fit</p>
<p class="sb" style="left:1565.3px;top:178.6px;transform:scaleX(.885)">Reset</p>
<div class="ed" style="left:1514.3px;top:211.0px;width:79.8px;height:20.4px"></div>
<p class="sb" style="left:1519.3px;top:213.0px">0.0</p>
<b class="wb"></b></div>
<div class="win" style="left:1384.9px;top:485.4px;width:1607.7px;height:233.4px">
<div class="tb" style="height:34px;"></div>
<svg width="17.2" height="17.2" style="left:9.8px;top:7.8px"><use href="#ap"/></svg>
<p class="tt" style="left:32.0px;top:6.8px">CPU Package Temperature</p>
<svg width="12" height="12" style="left:1581.3px;top:10.2px"><use href="#cx"/></svg>
<b style="left:0;top:33.3px;width:1510.7px;height:1.2px;background:#9a9a9a"></b>
<div class="ga" style="left:1.0px;top:34.5px;width:1509.1px;height:196.6px">
<svg width="1509.1" height="196.6" style="left:0;top:0" viewBox="0 0 1509.1 196.6"><path d="M43.9 198.6V66.8H45.6V92.4H49.1V86.5H50.7V92.4H53.5V49.1H55.6V43.3H58.1V37.4H62.1V35.4H65.1V33.4H67.6V29.5H73.6V31.5H75.6V27.5H78.1V29.5H80.7V45.2H82.6V47.2H86.1V43.3H88.1V45.2H90.1H92.5H94.8V43.3H97.2H99.5H101.9V45.2H104.3H106.6H109.0V43.3H111.3H113.7V45.2H116.1V41.3H118.4V43.3H120.8H123.1H125.5V41.3H127.9V43.3H130.2H132.6V37.4H134.9V43.3H137.3V41.3H139.7H142.0H144.4H146.7H149.1H151.5V39.3H153.8V41.3H156.2H158.5H160.9V39.3H163.3V41.3H165.6V39.3H168.0H170.3H172.7H175.1H177.4V41.3H179.8H182.1V39.3H184.5V37.4H186.9H189.2V39.3H191.6H193.9V37.4H196.3H198.7V39.3H201.0H203.4V37.4H205.7H208.1H210.5H212.8H215.2H217.5H219.9V39.3H222.3V37.4H224.6V35.4H227.0V37.4H229.3V39.3H231.7V37.4H234.1H236.4V39.3H238.8V37.4H241.1H243.5H245.9H248.2V35.4H250.6H252.9V37.4H255.3V35.4H257.7V33.4H260.0H262.4H264.7V37.4H267.1H269.5V35.4H271.8H274.2H276.5H278.9V33.4H281.3H283.6H286.0V35.4H288.3H290.7H293.1V33.4H295.4H297.8V35.4H300.1H302.5H304.9V33.4H307.2V35.4H309.6H311.9H314.3H316.7V31.5H319.0H321.4H323.7V33.4H326.1V35.4H328.5H330.8H333.2H335.5H337.9H340.3H342.6H345.0V37.4H347.3V35.4H349.7V37.4H352.1H354.4V31.5H356.8V35.4H359.1H361.5H363.9H366.2H368.6H370.9V33.4H373.3V37.4H375.7V35.4H378.0H380.4H382.7H385.1H387.5V37.4H389.8V35.4H392.2H394.5H396.9H399.3H401.6V31.5H404.0H406.3V37.4H408.7V31.5H411.1H413.4V37.4H415.8H418.1H420.5H422.9V35.4H425.2V33.4H427.6H429.9H432.3H434.7H437.0H439.4V31.5H441.7H444.1V35.4H446.5H448.8H451.2H453.5H455.9V33.4H458.3V35.4H460.6H463.0H465.3H467.7V33.4H470.1V35.4H472.4V33.4H474.8H477.1V35.4H479.5V33.4H481.9H484.2V35.4H486.6V37.4H488.9H491.3V35.4H493.7H496.0V33.4H498.4H500.7H503.1V35.4H505.5H507.8H510.2H512.5H514.9V33.4H517.3H519.6H522.0H524.3V31.5H526.7V35.4H529.1V31.5H531.4H533.8V33.4H536.1H538.5V35.4H540.9H543.2V33.4H545.6H547.9H550.3H552.7V31.5H555.0V33.4H557.4H559.7H562.1V35.4H564.5V31.5H566.8H569.2H571.5V33.4H573.9V31.5H576.3V33.4H578.6H581.0V35.4H583.3V33.4H585.7H588.1H590.4H592.8H595.1H597.5V35.4H599.9H602.2V33.4H604.6H606.9H609.3H611.7H614.0H616.4H618.7H621.1H623.5H625.8H628.2V29.5H630.5V33.4H632.9V29.5H635.3V31.5H637.6V33.4H640.0H642.3H644.7V31.5H647.1V29.5H649.4H651.8H654.1H656.5H658.9H661.2V33.4H663.6H665.9V31.5H668.3H670.7H673.0V33.4H675.4H677.7H680.1H682.5H684.8V35.4H687.2V33.4H689.5H691.9H694.3H696.6V35.4H699.0H701.3V33.4H703.7V31.5H706.1H708.4H710.8V33.4H713.1V35.4H715.5V33.4H717.9H720.2H722.6V31.5H724.9V33.4H727.3V31.5H729.7H732.0H734.4H736.7V33.4H739.1V31.5H741.5V33.4H743.8H746.2H748.5H750.9V31.5H753.3H755.6V33.4H758.0V35.4H760.3H762.7V33.4H765.1H767.4H769.8V31.5H772.1V29.5H774.5H776.9H779.2H781.6H783.9V31.5H786.3H788.7H791.0H793.4H795.7V33.4H798.1H800.5H802.8H805.2H807.5H809.9V35.4H812.3V33.4H814.6H817.0V35.4H819.3V33.4H821.7H824.1V31.5H826.4H828.8H831.1V33.4H833.5H835.9H838.2V31.5H840.6V33.4H842.9V35.4H845.3H847.7V31.5H850.0H852.4V33.4H854.7H857.1V35.4H859.5H861.8V33.4H864.2H866.5V31.5H868.9V33.4H871.3V35.4H873.6V33.4H876.0H878.3H880.7H883.1H885.4H887.8H890.1V31.5H892.5V33.4H894.9H897.2V31.5H899.6V33.4H901.9V31.5H904.3V33.4H906.7H909.0H911.4H913.7H916.1H918.5H920.8H923.2H925.5H927.9H930.3H932.6H935.0H937.3H939.7H942.1H944.4H946.8H949.1H951.5H953.9H956.2H958.6H960.9H963.3H965.7H968.0H970.4H972.7H975.1V31.5H977.5V33.4H979.8V35.4H982.2V33.4H984.5H986.9H989.3H991.6H994.0H996.3V35.4H998.7H1001.1V33.4H1003.4V35.4H1005.8V33.4H1008.1H1010.5H1012.9H1015.2H1017.6H1019.9V35.4H1022.3H1024.7V31.5H1027.0V33.4H1029.4H1031.7H1034.1H1036.5H1038.8H1041.2H1043.5H1045.9H1048.3H1050.6V31.5H1053.0V33.4H1055.3H1057.7V31.5H1060.1V35.4H1062.4H1064.8V33.4H1067.1H1069.5V35.4H1071.9H1074.2V33.4H1076.6H1078.9H1081.3H1083.7H1086.0H1088.4H1090.7H1093.1H1095.5H1097.8H1100.2H1102.5H1104.9H1107.3H1109.6H1112.0H1114.3H1116.7H1119.1H1121.4H1123.8V31.5H1126.1V33.4H1128.5H1130.9H1133.2H1135.6H1137.9H1140.3H1142.7H1145.0H1147.4V31.5H1149.7H1152.1V33.4H1154.5V35.4H1156.8V33.4H1159.2H1161.5H1163.9H1166.3V31.5H1168.6V35.4H1171.0H1173.3V33.4H1175.7V35.4H1178.1V33.4H1180.4H1182.8V35.4H1185.1H1187.5V33.4H1189.9H1192.2H1194.6V31.5H1196.9H1199.3V33.4H1201.7H1204.0V31.5H1206.4H1208.7H1211.1H1213.5V33.4H1215.8H1218.2V31.5H1220.5V35.4H1222.9V33.4H1225.3H1227.6H1230.0H1232.3V29.5H1234.7H1237.1V35.4H1239.4V33.4H1241.8H1244.1H1246.5H1248.9H1251.2H1253.6H1255.9H1258.3H1260.7V31.5H1263.0V33.4H1265.4H1267.7H1270.1H1272.5H1274.8H1277.2H1279.5H1281.9H1284.3H1286.6V31.5H1289.0V35.4H1291.3V33.4H1293.7H1296.1V31.5H1298.4V29.5H1300.8V33.4H1303.1H1305.5H1307.9V35.4H1310.2V33.4H1312.6V35.4H1314.9V33.4H1317.3H1319.7H1322.0H1324.4V35.4H1326.7V33.4H1329.1H1331.5H1333.8H1336.2H1338.5V29.5H1340.9V35.4H1343.3V33.4H1345.6H1348.0H1350.3V35.4H1352.7H1355.1V33.4H1357.4V35.4H1359.8V31.5H1362.1H1364.5V33.4H1366.9V29.5H1369.2V33.4H1371.6V35.4H1373.9V33.4H1376.3H1378.7H1381.0H1383.4H1385.7H1388.1H1390.5H1392.8V31.5H1395.2H1397.5V33.4H1399.9H1402.3H1404.6H1407.0H1409.3H1411.7H1414.1H1416.4H1418.8V31.5H1421.1V33.4H1423.5H1425.9H1428.2H1430.6V35.4H1432.9H1435.3V33.4H1437.7H1440.0V35.4H1442.4H1444.7H1447.1H1449.5H1451.8H1454.2H1456.5H1458.9H1461.3V33.4H1463.6V35.4H1466.0V31.5H1468.3V33.4H1470.7V31.5H1473.1V33.4H1475.4H1477.8H1480.1H1482.5V35.4H1484.9V33.4H1487.2V29.5H1489.6H1491.9H1494.3H1496.7H1499.0V33.4H1501.4H1503.7H1506.1V31.5H1508.5H1509.1V198.6Z" fill="#ff9090"/></svg>
<b class="gg" style="background-image:repeating-linear-gradient(to right,#b2ccf0 0,#b2ccf0 .95px,transparent .95px,transparent 15.625px),repeating-linear-gradient(to bottom,#b2ccf0 0,#b2ccf0 .95px,transparent .95px,transparent 15.625px);background-position:11.70px 0,0 8.20px"></b>
<svg width="1509.1" height="196.6" style="left:0;top:0" viewBox="0 0 1509.1 196.6"><path d="M43.9 66.8H45.6V92.4H49.1V86.5H50.7V92.4H53.5V49.1H55.6V43.3H58.1V37.4H62.1V35.4H65.1V33.4H67.6V29.5H73.6V31.5H75.6V27.5H78.1V29.5H80.7V45.2H82.6V47.2H86.1V43.3H88.1V45.2H90.1H92.5H94.8V43.3H97.2H99.5H101.9V45.2H104.3H106.6H109.0V43.3H111.3H113.7V45.2H116.1V41.3H118.4V43.3H120.8H123.1H125.5V41.3H127.9V43.3H130.2H132.6V37.4H134.9V43.3H137.3V41.3H139.7H142.0H144.4H146.7H149.1H151.5V39.3H153.8V41.3H156.2H158.5H160.9V39.3H163.3V41.3H165.6V39.3H168.0H170.3H172.7H175.1H177.4V41.3H179.8H182.1V39.3H184.5V37.4H186.9H189.2V39.3H191.6H193.9V37.4H196.3H198.7V39.3H201.0H203.4V37.4H205.7H208.1H210.5H212.8H215.2H217.5H219.9V39.3H222.3V37.4H224.6V35.4H227.0V37.4H229.3V39.3H231.7V37.4H234.1H236.4V39.3H238.8V37.4H241.1H243.5H245.9H248.2V35.4H250.6H252.9V37.4H255.3V35.4H257.7V33.4H260.0H262.4H264.7V37.4H267.1H269.5V35.4H271.8H274.2H276.5H278.9V33.4H281.3H283.6H286.0V35.4H288.3H290.7H293.1V33.4H295.4H297.8V35.4H300.1H302.5H304.9V33.4H307.2V35.4H309.6H311.9H314.3H316.7V31.5H319.0H321.4H323.7V33.4H326.1V35.4H328.5H330.8H333.2H335.5H337.9H340.3H342.6H345.0V37.4H347.3V35.4H349.7V37.4H352.1H354.4V31.5H356.8V35.4H359.1H361.5H363.9H366.2H368.6H370.9V33.4H373.3V37.4H375.7V35.4H378.0H380.4H382.7H385.1H387.5V37.4H389.8V35.4H392.2H394.5H396.9H399.3H401.6V31.5H404.0H406.3V37.4H408.7V31.5H411.1H413.4V37.4H415.8H418.1H420.5H422.9V35.4H425.2V33.4H427.6H429.9H432.3H434.7H437.0H439.4V31.5H441.7H444.1V35.4H446.5H448.8H451.2H453.5H455.9V33.4H458.3V35.4H460.6H463.0H465.3H467.7V33.4H470.1V35.4H472.4V33.4H474.8H477.1V35.4H479.5V33.4H481.9H484.2V35.4H486.6V37.4H488.9H491.3V35.4H493.7H496.0V33.4H498.4H500.7H503.1V35.4H505.5H507.8H510.2H512.5H514.9V33.4H517.3H519.6H522.0H524.3V31.5H526.7V35.4H529.1V31.5H531.4H533.8V33.4H536.1H538.5V35.4H540.9H543.2V33.4H545.6H547.9H550.3H552.7V31.5H555.0V33.4H557.4H559.7H562.1V35.4H564.5V31.5H566.8H569.2H571.5V33.4H573.9V31.5H576.3V33.4H578.6H581.0V35.4H583.3V33.4H585.7H588.1H590.4H592.8H595.1H597.5V35.4H599.9H602.2V33.4H604.6H606.9H609.3H611.7H614.0H616.4H618.7H621.1H623.5H625.8H628.2V29.5H630.5V33.4H632.9V29.5H635.3V31.5H637.6V33.4H640.0H642.3H644.7V31.5H647.1V29.5H649.4H651.8H654.1H656.5H658.9H661.2V33.4H663.6H665.9V31.5H668.3H670.7H673.0V33.4H675.4H677.7H680.1H682.5H684.8V35.4H687.2V33.4H689.5H691.9H694.3H696.6V35.4H699.0H701.3V33.4H703.7V31.5H706.1H708.4H710.8V33.4H713.1V35.4H715.5V33.4H717.9H720.2H722.6V31.5H724.9V33.4H727.3V31.5H729.7H732.0H734.4H736.7V33.4H739.1V31.5H741.5V33.4H743.8H746.2H748.5H750.9V31.5H753.3H755.6V33.4H758.0V35.4H760.3H762.7V33.4H765.1H767.4H769.8V31.5H772.1V29.5H774.5H776.9H779.2H781.6H783.9V31.5H786.3H788.7H791.0H793.4H795.7V33.4H798.1H800.5H802.8H805.2H807.5H809.9V35.4H812.3V33.4H814.6H817.0V35.4H819.3V33.4H821.7H824.1V31.5H826.4H828.8H831.1V33.4H833.5H835.9H838.2V31.5H840.6V33.4H842.9V35.4H845.3H847.7V31.5H850.0H852.4V33.4H854.7H857.1V35.4H859.5H861.8V33.4H864.2H866.5V31.5H868.9V33.4H871.3V35.4H873.6V33.4H876.0H878.3H880.7H883.1H885.4H887.8H890.1V31.5H892.5V33.4H894.9H897.2V31.5H899.6V33.4H901.9V31.5H904.3V33.4H906.7H909.0H911.4H913.7H916.1H918.5H920.8H923.2H925.5H927.9H930.3H932.6H935.0H937.3H939.7H942.1H944.4H946.8H949.1H951.5H953.9H956.2H958.6H960.9H963.3H965.7H968.0H970.4H972.7H975.1V31.5H977.5V33.4H979.8V35.4H982.2V33.4H984.5H986.9H989.3H991.6H994.0H996.3V35.4H998.7H1001.1V33.4H1003.4V35.4H1005.8V33.4H1008.1H1010.5H1012.9H1015.2H1017.6H1019.9V35.4H1022.3H1024.7V31.5H1027.0V33.4H1029.4H1031.7H1034.1H1036.5H1038.8H1041.2H1043.5H1045.9H1048.3H1050.6V31.5H1053.0V33.4H1055.3H1057.7V31.5H1060.1V35.4H1062.4H1064.8V33.4H1067.1H1069.5V35.4H1071.9H1074.2V33.4H1076.6H1078.9H1081.3H1083.7H1086.0H1088.4H1090.7H1093.1H1095.5H1097.8H1100.2H1102.5H1104.9H1107.3H1109.6H1112.0H1114.3H1116.7H1119.1H1121.4H1123.8V31.5H1126.1V33.4H1128.5H1130.9H1133.2H1135.6H1137.9H1140.3H1142.7H1145.0H1147.4V31.5H1149.7H1152.1V33.4H1154.5V35.4H1156.8V33.4H1159.2H1161.5H1163.9H1166.3V31.5H1168.6V35.4H1171.0H1173.3V33.4H1175.7V35.4H1178.1V33.4H1180.4H1182.8V35.4H1185.1H1187.5V33.4H1189.9H1192.2H1194.6V31.5H1196.9H1199.3V33.4H1201.7H1204.0V31.5H1206.4H1208.7H1211.1H1213.5V33.4H1215.8H1218.2V31.5H1220.5V35.4H1222.9V33.4H1225.3H1227.6H1230.0H1232.3V29.5H1234.7H1237.1V35.4H1239.4V33.4H1241.8H1244.1H1246.5H1248.9H1251.2H1253.6H1255.9H1258.3H1260.7V31.5H1263.0V33.4H1265.4H1267.7H1270.1H1272.5H1274.8H1277.2H1279.5H1281.9H1284.3H1286.6V31.5H1289.0V35.4H1291.3V33.4H1293.7H1296.1V31.5H1298.4V29.5H1300.8V33.4H1303.1H1305.5H1307.9V35.4H1310.2V33.4H1312.6V35.4H1314.9V33.4H1317.3H1319.7H1322.0H1324.4V35.4H1326.7V33.4H1329.1H1331.5H1333.8H1336.2H1338.5V29.5H1340.9V35.4H1343.3V33.4H1345.6H1348.0H1350.3V35.4H1352.7H1355.1V33.4H1357.4V35.4H1359.8V31.5H1362.1H1364.5V33.4H1366.9V29.5H1369.2V33.4H1371.6V35.4H1373.9V33.4H1376.3H1378.7H1381.0H1383.4H1385.7H1388.1H1390.5H1392.8V31.5H1395.2H1397.5V33.4H1399.9H1402.3H1404.6H1407.0H1409.3H1411.7H1414.1H1416.4H1418.8V31.5H1421.1V33.4H1423.5H1425.9H1428.2H1430.6V35.4H1432.9H1435.3V33.4H1437.7H1440.0V35.4H1442.4H1444.7H1447.1H1449.5H1451.8H1454.2H1456.5H1458.9H1461.3V33.4H1463.6V35.4H1466.0V31.5H1468.3V33.4H1470.7V31.5H1473.1V33.4H1475.4H1477.8H1480.1H1482.5V35.4H1484.9V33.4H1487.2V29.5H1489.6H1491.9H1494.3H1496.7H1499.0V33.4H1501.4H1503.7H1506.1V31.5H1508.5H1509.1" fill="none" stroke="#f51b1b" stroke-width="1.2" stroke-linejoin="round"/></svg>
<b style="left:0;top:0;width:16px;bottom:0;background:linear-gradient(to right,rgba(120,150,170,.20),rgba(120,150,170,0))"></b>
<b style="left:0;top:0;right:0;height:3px;background:linear-gradient(rgba(100,120,140,.25),rgba(100,120,140,0))"></b>
</div>
<div class="ed" style="left:1514.3px;top:33.4px;width:79.8px;height:20.6px"></div>
<p class="sb" style="left:1519.3px;top:35.4px">100</p>
<i class="sq" style="left:1520.6px;top:113.3px;background:#ff0000"></i>
<i class="sq" style="left:1545.3px;top:113.3px;background:#e1f5fe"></i>
<i class="sq" style="left:1570.5px;top:113.3px;background:#a9c4e9"></i>
<div class="ed" style="left:1514.3px;top:134.0px;width:78px;height:19.8px"></div>
<p class="sb" style="left:1519.3px;top:135.9px">83 °C</p>
<div class="btn" style="left:1514.5px;top:174.4px;width:44.9px;height:24.2px"></div>
<div class="btn" style="left:1561.5px;top:174.4px;width:33.8px;height:24.2px"></div>
<p class="sb" style="left:1518.5px;top:178.6px">Auto Fit</p>
<p class="sb" style="left:1565.3px;top:178.6px;transform:scaleX(.885)">Reset</p>
<div class="ed" style="left:1514.3px;top:211.0px;width:79.8px;height:20.4px"></div>
<p class="sb" style="left:1519.3px;top:213.0px">0</p>
<b class="wb"></b></div>
<div class="win" style="left:1384.9px;top:727.5px;width:1607.7px;height:233.4px">
<div class="tb" style="height:34px;"></div>
<svg width="17.2" height="17.2" style="left:9.8px;top:7.8px"><use href="#ap"/></svg>
<p class="tt" style="left:32.0px;top:6.8px">CPU Package Power</p>
<svg width="12" height="12" style="left:1581.3px;top:10.2px"><use href="#cx"/></svg>
<b style="left:0;top:33.3px;width:1510.7px;height:1.2px;background:#9a9a9a"></b>
<div class="ga" style="left:1.0px;top:34.5px;width:1509.1px;height:196.6px">
<svg width="1509.1" height="196.6" style="left:0;top:0" viewBox="0 0 1509.1 196.6"><path d="M43.9 198.6V128.1H45.6V168.7H47.6V171.9H49.1V174.4H50.6V178.3H53.5V132.0H55.6V59.1H69.9V60.6H71.3V62.7H73.1V66.3H77.1V68.7H80.7V77.1H83.4V101.7H86.1V100.8H90.1V99.5H96.1V97.3H99.1V95.2H104.1V94.0H108.1V92.8H110.1V90.4H120.1V88.6H121.7V86.7H144.1V85.7H147.5V86.7H170.9V85.7H173.7V86.7H243.5V87.5H246.2V86.7H460.4V85.7H463.3V86.7H632.0V85.8H634.5V86.7H668.0V85.8H671.2V86.7H751.2V85.8H755.0V86.7H925.8V85.7H928.3V86.7H1001.7V87.5H1004.5V86.7H1150.5V85.7H1153.2V86.7H1239.5V87.5H1241.8V86.7H1271.5V85.7H1274.6V86.7H1356.6V85.7H1359.1V86.7H1380.2V85.8H1383.1V86.7H1426.7V85.7H1429.2V86.7H1445.0V85.7H1447.8V86.7H1509.1V198.6Z" fill="#98aff2"/></svg>
<b class="gg" style="background-image:repeating-linear-gradient(to right,#b2ccf0 0,#b2ccf0 .95px,transparent .95px,transparent 15.625px),repeating-linear-gradient(to bottom,#b2ccf0 0,#b2ccf0 .95px,transparent .95px,transparent 15.625px);background-position:11.70px 0,0 8.20px"></b>
<svg width="1509.1" height="196.6" style="left:0;top:0" viewBox="0 0 1509.1 196.6"><path d="M43.9 128.1H45.6V168.7H47.6V171.9H49.1V174.4H50.6V178.3H53.5V132.0H55.6V59.1H69.9V60.6H71.3V62.7H73.1V66.3H77.1V68.7H80.7V77.1H83.4V101.7H86.1V100.8H90.1V99.5H96.1V97.3H99.1V95.2H104.1V94.0H108.1V92.8H110.1V90.4H120.1V88.6H121.7V86.7H144.1V85.7H147.5V86.7H170.9V85.7H173.7V86.7H243.5V87.5H246.2V86.7H460.4V85.7H463.3V86.7H632.0V85.8H634.5V86.7H668.0V85.8H671.2V86.7H751.2V85.8H755.0V86.7H925.8V85.7H928.3V86.7H1001.7V87.5H1004.5V86.7H1150.5V85.7H1153.2V86.7H1239.5V87.5H1241.8V86.7H1271.5V85.7H1274.6V86.7H1356.6V85.7H1359.1V86.7H1380.2V85.8H1383.1V86.7H1426.7V85.7H1429.2V86.7H1445.0V85.7H1447.8V86.7H1509.1" fill="none" stroke="#2a7fc4" stroke-width="1.2" stroke-linejoin="round"/></svg>
<b style="left:0;top:0;width:16px;bottom:0;background:linear-gradient(to right,rgba(120,150,170,.20),rgba(120,150,170,0))"></b>
<b style="left:0;top:0;right:0;height:3px;background:linear-gradient(rgba(100,120,140,.25),rgba(100,120,140,0))"></b>
</div>
<div class="ed" style="left:1514.3px;top:33.4px;width:79.8px;height:20.6px"></div>
<p class="sb" style="left:1519.3px;top:35.4px">50.000</p>
<i class="sq" style="left:1520.6px;top:113.3px;background:#0f78b4"></i>
<i class="sq" style="left:1545.3px;top:113.3px;background:#e1f5fe"></i>
<i class="sq" style="left:1570.5px;top:113.3px;background:#a9c4e9"></i>
<div class="ed" style="left:1514.3px;top:134.0px;width:78px;height:19.8px"></div>
<p class="sb" style="left:1519.3px;top:135.9px">27.935 W</p>
<div class="btn" style="left:1514.5px;top:174.4px;width:44.9px;height:24.2px"></div>
<div class="btn" style="left:1561.5px;top:174.4px;width:33.8px;height:24.2px"></div>
<p class="sb" style="left:1518.5px;top:178.6px">Auto Fit</p>
<p class="sb" style="left:1565.3px;top:178.6px;transform:scaleX(.885)">Reset</p>
<div class="ed" style="left:1514.3px;top:211.0px;width:79.8px;height:20.4px"></div>
<p class="sb" style="left:1519.3px;top:213.0px">0.000</p>
<b class="wb"></b></div>
<div class="win" style="left:1384.9px;top:969.6px;width:1607.7px;height:233.4px">
<div class="tb" style="height:34px;"></div>
<svg width="17.2" height="17.2" style="left:9.8px;top:7.8px"><use href="#ap"/></svg>
<p class="tt" style="left:32.0px;top:6.8px">GPU Clock</p>
<svg width="12" height="12" style="left:1581.3px;top:10.2px"><use href="#cx"/></svg>
<b style="left:0;top:33.3px;width:1510.7px;height:1.2px;background:#9a9a9a"></b>
<div class="ga" style="left:1.0px;top:34.5px;width:1509.1px;height:196.6px">
<svg width="1509.1" height="196.6" style="left:0;top:0" viewBox="0 0 1509.1 196.6"><path d="M43.9 198.6V157.7H49.1V145.5H50.9V157.7H1509.1V198.6Z" fill="#9aff9e"/></svg>
<b class="gg" style="background-image:repeating-linear-gradient(to right,#b2ccf0 0,#b2ccf0 .95px,transparent .95px,transparent 15.625px),repeating-linear-gradient(to bottom,#b2ccf0 0,#b2ccf0 .95px,transparent .95px,transparent 15.625px);background-position:11.70px 0,0 8.20px"></b>
<svg width="1509.1" height="196.6" style="left:0;top:0" viewBox="0 0 1509.1 196.6"><path d="M43.9 157.7H49.1V145.5H50.9V157.7H1509.1" fill="none" stroke="#0aee38" stroke-width="1.3" stroke-linejoin="round"/></svg>
<b style="left:0;top:0;width:16px;bottom:0;background:linear-gradient(to right,rgba(120,150,170,.20),rgba(120,150,170,0))"></b>
<b style="left:0;top:0;right:0;height:3px;background:linear-gradient(rgba(100,120,140,.25),rgba(100,120,140,0))"></b>
</div>
<div class="ed" style="left:1514.3px;top:33.4px;width:79.8px;height:20.6px"></div>
<p class="sb" style="left:1519.3px;top:35.4px">1500.0</p>
<i class="sq" style="left:1520.6px;top:113.3px;background:#00f73c"></i>
<i class="sq" style="left:1545.3px;top:113.3px;background:#e1f5fe"></i>
<i class="sq" style="left:1570.5px;top:113.3px;background:#a9c4e9"></i>
<div class="ed" style="left:1514.3px;top:134.0px;width:78px;height:19.8px"></div>
<p class="sb" style="left:1519.3px;top:135.9px">300.0 MHz</p>
<div class="btn" style="left:1514.5px;top:174.4px;width:44.9px;height:24.2px"></div>
<div class="btn" style="left:1561.5px;top:174.4px;width:33.8px;height:24.2px"></div>
<p class="sb" style="left:1518.5px;top:178.6px">Auto Fit</p>
<p class="sb" style="left:1565.3px;top:178.6px;transform:scaleX(.885)">Reset</p>
<div class="ed" style="left:1514.3px;top:211.0px;width:79.8px;height:20.4px"></div>
<p class="sb" style="left:1519.3px;top:213.0px">0.0</p>
<b class="wb"></b></div>
<div class="win" style="left:1384.9px;top:1211.7px;width:1607.7px;height:233.4px">
<div class="tb" style="height:34px;"></div>
<svg width="17.2" height="17.2" style="left:9.8px;top:7.8px"><use href="#ap"/></svg>
<p class="tt" style="left:32.0px;top:6.8px">CPU GT Cores (Graphics)</p>
<svg width="12" height="12" style="left:1581.3px;top:10.2px"><use href="#cx"/></svg>
<b style="left:0;top:33.3px;width:1510.7px;height:1.2px;background:#9a9a9a"></b>
<div class="ga" style="left:1.0px;top:34.5px;width:1509.1px;height:196.6px">
<svg width="1509.1" height="196.6" style="left:0;top:0" viewBox="0 0 1509.1 196.6"><path d="M43.9 198.6V112.1H50.6V113.0H53.1V106.2H55.1V104.2H57.1V98.3H59.6V96.3H62.1V90.4H67.1V86.5H73.1V84.5H76.6V82.6H80.1V83.6H87.1V85.3H94.1V83.4H96.5V85.3H98.8H101.2H103.5H105.9H108.3H110.6H113.0H115.3H117.7V83.4H120.1H122.4V85.3H124.8H127.1H129.5V83.4H131.9H134.2H136.6H138.9V85.3H141.3H143.7H146.0H148.4V81.6H150.7V83.4H153.1V81.4H155.5V83.4H157.8H160.2H162.5H164.9H167.3H169.6H172.0H174.3H176.7H179.1H181.4H183.8H186.1H188.5H190.9H193.2H195.6H197.9H200.3H202.7H205.0H207.4H209.7V81.4H212.1H214.5H216.8H219.2V83.4H221.5H223.9H226.3H228.6V81.4H231.0H233.3H235.7V79.4H238.1V81.4H240.4H242.8V77.7H245.1H247.5H249.9V81.4H252.2H254.6H256.9H259.3H261.7H264.0H266.4V83.2H268.7V81.4H271.1H273.5H275.8V79.4H278.2V81.4H280.5H282.9H285.3H287.6H290.0H292.3H294.7V79.4H297.1H299.4H301.8V81.4H304.1H306.5V79.4H308.9V81.4H311.2H313.6H315.9H318.3H320.7H323.0H325.4H327.7H330.1H332.5H334.8H337.2V77.7H339.5V79.4H341.9V81.4H344.3H346.6V77.7H349.0H351.3V81.4H353.7H356.1H358.4V83.2H360.8H363.1V81.4H365.5H367.9H370.2H372.6H374.9H377.3H379.7H382.0H384.4H386.7H389.1H391.5H393.8H396.2V79.8H398.5H400.9H403.3H405.6H408.0H410.3H412.7H415.1H417.4H419.8H422.1V76.1H424.5H426.9H429.2H431.6H433.9V77.9H436.3V79.8H438.7H441.0H443.4H445.7H448.1H450.5H452.8V77.9H455.2H457.5V81.6H459.9H462.3V79.8H464.6H467.0H469.3H471.7H474.1H476.4H478.8V77.9H481.1H483.5V76.1H485.9H488.2V79.8H490.6H492.9H495.3H497.7H500.0H502.4H504.7H507.1H509.5H511.8H514.2H516.5H518.9H521.3H523.6H526.0H528.3H530.7H533.1H535.4H537.8V81.6H540.1H542.5V79.8H544.9H547.2H549.6H551.9H554.3H556.7H559.0H561.4H563.7H566.1H568.5H570.8H573.2H575.5H577.9H580.3H582.6H585.0V77.9H587.3V79.8H589.7H592.1H594.4V77.9H596.8H599.1V79.8H601.5V77.9H603.9V79.8H606.2H608.6H610.9H613.3H615.7H618.0H620.4H622.7H625.1H627.5H629.8H632.2V77.9H634.5V81.6H636.9V79.8H639.3H641.6V77.9H644.0H646.3H648.7H651.1H653.4H655.8V79.8H658.1H660.5H662.9H665.2H667.6H669.9H672.3H674.7H677.0V76.1H679.4H681.7H684.1V77.9H686.5V79.8H688.8H691.2H693.5H695.9V81.6H698.3V76.1H700.6H703.0H705.3V79.8H707.7H710.1H712.4H714.8V78.6H717.1H719.5H721.9H724.2H726.6H728.9H731.3V76.7H733.7H736.0H738.4H740.7V80.4H743.1V78.6H745.5H747.8H750.2V76.7H752.5H754.9H757.3H759.6V78.6H762.0V76.7H764.3V80.4H766.7V78.6H769.1H771.4H773.8H776.1H778.5H780.9H783.2H785.6H787.9H790.3H792.7H795.0H797.4H799.7H802.1H804.5H806.8H809.2H811.5H813.9H816.3H818.6H821.0H823.3H825.7V80.4H828.1V78.6H830.4H832.8H835.1H837.5H839.9H842.2H844.6H846.9H849.3H851.7H854.0H856.4H858.7H861.1H863.5H865.8H868.2H870.5H872.9H875.3V76.7H877.6V78.6H880.0H882.3H884.7H887.1H889.4H891.8V76.7H894.1H896.5V78.6H898.9V74.9H901.2H903.6V78.6H905.9H908.3H910.7H913.0H915.4H917.7H920.1H922.5H924.8H927.2H929.5H931.9H934.3H936.6H939.0H941.3H943.7H946.1H948.4H950.8H953.1H955.5H957.9H960.2H962.6H964.9H967.3V74.9H969.7H972.0V78.6H974.4H976.7H979.1H981.5H983.8H986.2H988.5H990.9H993.3H995.6H998.0V80.4H1000.3H1002.7V78.6H1005.1H1007.4V76.7H1009.8V78.6H1012.1H1014.5H1016.9H1019.2H1021.6H1023.9H1026.3H1028.7V76.7H1031.0V80.4H1033.4V78.6H1035.7H1038.1H1040.5H1042.8H1045.2H1047.5H1049.9H1052.3H1054.6H1057.0H1059.3V80.4H1061.7V78.6H1064.1H1066.4H1068.8H1071.1H1073.5H1075.9H1078.2H1080.6H1082.9H1085.3H1087.7H1090.0H1092.4H1094.7H1097.1H1099.5V76.7H1101.8H1104.2H1106.5V78.6H1108.9H1111.3H1113.6H1116.0V77.7H1118.3H1120.7H1123.1H1125.4H1127.8H1130.1H1132.5H1134.9H1137.2H1139.6H1141.9H1144.3H1146.7H1149.0V75.7H1151.4V79.4H1153.7V77.7H1156.1H1158.5H1160.8H1163.2H1165.5H1167.9H1170.3H1172.6H1175.0H1177.3H1179.7H1182.1H1184.4H1186.8H1189.1H1191.5H1193.9H1196.2H1198.6H1200.9H1203.3H1205.7H1208.0H1210.4H1212.7V75.7H1215.1H1217.5H1219.8H1222.2H1224.5H1226.9V73.9H1229.3H1231.6V77.7H1234.0H1236.3H1238.7H1241.1H1243.4H1245.8H1248.1H1250.5H1252.9H1255.2H1257.6H1259.9H1262.3V75.7H1264.7H1267.0H1269.4V77.7H1271.7H1274.1H1276.5H1278.8H1281.2H1283.5H1285.9H1288.3H1290.6H1293.0H1295.3H1297.7H1300.1H1302.4H1304.8H1307.1H1309.5H1311.9H1314.2H1316.6H1318.9H1321.3H1323.7H1326.0H1328.4H1330.7H1333.1H1335.5H1337.8V75.7H1340.2H1342.5H1344.9V77.7H1347.3H1349.6H1352.0H1354.3H1356.7H1359.1H1361.4H1363.8H1366.1H1368.5H1370.9H1373.2H1375.6H1377.9H1380.3H1382.7H1385.0H1387.4H1389.7H1392.1H1394.5H1396.8H1399.2H1401.5V75.7H1403.9H1406.3H1408.6H1411.0H1413.3V77.7H1415.7H1418.1H1420.4H1422.8H1425.1H1427.5H1429.9V79.4H1432.2H1434.6H1436.9H1439.3V77.7H1441.7H1444.0H1446.4H1448.7H1451.1V75.7H1453.5V73.9H1455.8V77.7H1458.2H1460.5H1462.9V73.9H1465.3V77.7H1467.6H1470.0H1472.3V79.4H1474.7V77.7H1477.1H1479.4H1481.8H1484.1H1486.5H1488.9H1491.2H1493.6H1495.9H1498.3H1500.7H1503.0H1505.4H1507.7H1509.1V198.6Z" fill="#ff90b0"/></svg>
<b class="gg" style="background-image:repeating-linear-gradient(to right,#b2ccf0 0,#b2ccf0 .95px,transparent .95px,transparent 15.625px),repeating-linear-gradient(to bottom,#b2ccf0 0,#b2ccf0 .95px,transparent .95px,transparent 15.625px);background-position:11.70px 0,0 8.20px"></b>
<svg width="1509.1" height="196.6" style="left:0;top:0" viewBox="0 0 1509.1 196.6"><path d="M43.9 112.1H50.6V113.0H53.1V106.2H55.1V104.2H57.1V98.3H59.6V96.3H62.1V90.4H67.1V86.5H73.1V84.5H76.6V82.6H80.1V83.6H87.1V85.3H94.1V83.4H96.5V85.3H98.8H101.2H103.5H105.9H108.3H110.6H113.0H115.3H117.7V83.4H120.1H122.4V85.3H124.8H127.1H129.5V83.4H131.9H134.2H136.6H138.9V85.3H141.3H143.7H146.0H148.4V81.6H150.7V83.4H153.1V81.4H155.5V83.4H157.8H160.2H162.5H164.9H167.3H169.6H172.0H174.3H176.7H179.1H181.4H183.8H186.1H188.5H190.9H193.2H195.6H197.9H200.3H202.7H205.0H207.4H209.7V81.4H212.1H214.5H216.8H219.2V83.4H221.5H223.9H226.3H228.6V81.4H231.0H233.3H235.7V79.4H238.1V81.4H240.4H242.8V77.7H245.1H247.5H249.9V81.4H252.2H254.6H256.9H259.3H261.7H264.0H266.4V83.2H268.7V81.4H271.1H273.5H275.8V79.4H278.2V81.4H280.5H282.9H285.3H287.6H290.0H292.3H294.7V79.4H297.1H299.4H301.8V81.4H304.1H306.5V79.4H308.9V81.4H311.2H313.6H315.9H318.3H320.7H323.0H325.4H327.7H330.1H332.5H334.8H337.2V77.7H339.5V79.4H341.9V81.4H344.3H346.6V77.7H349.0H351.3V81.4H353.7H356.1H358.4V83.2H360.8H363.1V81.4H365.5H367.9H370.2H372.6H374.9H377.3H379.7H382.0H384.4H386.7H389.1H391.5H393.8H396.2V79.8H398.5H400.9H403.3H405.6H408.0H410.3H412.7H415.1H417.4H419.8H422.1V76.1H424.5H426.9H429.2H431.6H433.9V77.9H436.3V79.8H438.7H441.0H443.4H445.7H448.1H450.5H452.8V77.9H455.2H457.5V81.6H459.9H462.3V79.8H464.6H467.0H469.3H471.7H474.1H476.4H478.8V77.9H481.1H483.5V76.1H485.9H488.2V79.8H490.6H492.9H495.3H497.7H500.0H502.4H504.7H507.1H509.5H511.8H514.2H516.5H518.9H521.3H523.6H526.0H528.3H530.7H533.1H535.4H537.8V81.6H540.1H542.5V79.8H544.9H547.2H549.6H551.9H554.3H556.7H559.0H561.4H563.7H566.1H568.5H570.8H573.2H575.5H577.9H580.3H582.6H585.0V77.9H587.3V79.8H589.7H592.1H594.4V77.9H596.8H599.1V79.8H601.5V77.9H603.9V79.8H606.2H608.6H610.9H613.3H615.7H618.0H620.4H622.7H625.1H627.5H629.8H632.2V77.9H634.5V81.6H636.9V79.8H639.3H641.6V77.9H644.0H646.3H648.7H651.1H653.4H655.8V79.8H658.1H660.5H662.9H665.2H667.6H669.9H672.3H674.7H677.0V76.1H679.4H681.7H684.1V77.9H686.5V79.8H688.8H691.2H693.5H695.9V81.6H698.3V76.1H700.6H703.0H705.3V79.8H707.7H710.1H712.4H714.8V78.6H717.1H719.5H721.9H724.2H726.6H728.9H731.3V76.7H733.7H736.0H738.4H740.7V80.4H743.1V78.6H745.5H747.8H750.2V76.7H752.5H754.9H757.3H759.6V78.6H762.0V76.7H764.3V80.4H766.7V78.6H769.1H771.4H773.8H776.1H778.5H780.9H783.2H785.6H787.9H790.3H792.7H795.0H797.4H799.7H802.1H804.5H806.8H809.2H811.5H813.9H816.3H818.6H821.0H823.3H825.7V80.4H828.1V78.6H830.4H832.8H835.1H837.5H839.9H842.2H844.6H846.9H849.3H851.7H854.0H856.4H858.7H861.1H863.5H865.8H868.2H870.5H872.9H875.3V76.7H877.6V78.6H880.0H882.3H884.7H887.1H889.4H891.8V76.7H894.1H896.5V78.6H898.9V74.9H901.2H903.6V78.6H905.9H908.3H910.7H913.0H915.4H917.7H920.1H922.5H924.8H927.2H929.5H931.9H934.3H936.6H939.0H941.3H943.7H946.1H948.4H950.8H953.1H955.5H957.9H960.2H962.6H964.9H967.3V74.9H969.7H972.0V78.6H974.4H976.7H979.1H981.5H983.8H986.2H988.5H990.9H993.3H995.6H998.0V80.4H1000.3H1002.7V78.6H1005.1H1007.4V76.7H1009.8V78.6H1012.1H1014.5H1016.9H1019.2H1021.6H1023.9H1026.3H1028.7V76.7H1031.0V80.4H1033.4V78.6H1035.7H1038.1H1040.5H1042.8H1045.2H1047.5H1049.9H1052.3H1054.6H1057.0H1059.3V80.4H1061.7V78.6H1064.1H1066.4H1068.8H1071.1H1073.5H1075.9H1078.2H1080.6H1082.9H1085.3H1087.7H1090.0H1092.4H1094.7H1097.1H1099.5V76.7H1101.8H1104.2H1106.5V78.6H1108.9H1111.3H1113.6H1116.0V77.7H1118.3H1120.7H1123.1H1125.4H1127.8H1130.1H1132.5H1134.9H1137.2H1139.6H1141.9H1144.3H1146.7H1149.0V75.7H1151.4V79.4H1153.7V77.7H1156.1H1158.5H1160.8H1163.2H1165.5H1167.9H1170.3H1172.6H1175.0H1177.3H1179.7H1182.1H1184.4H1186.8H1189.1H1191.5H1193.9H1196.2H1198.6H1200.9H1203.3H1205.7H1208.0H1210.4H1212.7V75.7H1215.1H1217.5H1219.8H1222.2H1224.5H1226.9V73.9H1229.3H1231.6V77.7H1234.0H1236.3H1238.7H1241.1H1243.4H1245.8H1248.1H1250.5H1252.9H1255.2H1257.6H1259.9H1262.3V75.7H1264.7H1267.0H1269.4V77.7H1271.7H1274.1H1276.5H1278.8H1281.2H1283.5H1285.9H1288.3H1290.6H1293.0H1295.3H1297.7H1300.1H1302.4H1304.8H1307.1H1309.5H1311.9H1314.2H1316.6H1318.9H1321.3H1323.7H1326.0H1328.4H1330.7H1333.1H1335.5H1337.8V75.7H1340.2H1342.5H1344.9V77.7H1347.3H1349.6H1352.0H1354.3H1356.7H1359.1H1361.4H1363.8H1366.1H1368.5H1370.9H1373.2H1375.6H1377.9H1380.3H1382.7H1385.0H1387.4H1389.7H1392.1H1394.5H1396.8H1399.2H1401.5V75.7H1403.9H1406.3H1408.6H1411.0H1413.3V77.7H1415.7H1418.1H1420.4H1422.8H1425.1H1427.5H1429.9V79.4H1432.2H1434.6H1436.9H1439.3V77.7H1441.7H1444.0H1446.4H1448.7H1451.1V75.7H1453.5V73.9H1455.8V77.7H1458.2H1460.5H1462.9V73.9H1465.3V77.7H1467.6H1470.0H1472.3V79.4H1474.7V77.7H1477.1H1479.4H1481.8H1484.1H1486.5H1488.9H1491.2H1493.6H1495.9H1498.3H1500.7H1503.0H1505.4H1507.7H1509.1" fill="none" stroke="#ff1a78" stroke-width="1.2" stroke-linejoin="round"/></svg>
<b style="left:0;top:0;width:16px;bottom:0;background:linear-gradient(to right,rgba(120,150,170,.20),rgba(120,150,170,0))"></b>
<b style="left:0;top:0;right:0;height:3px;background:linear-gradient(rgba(100,120,140,.25),rgba(100,120,140,0))"></b>
</div>
<div class="ed" style="left:1514.3px;top:33.4px;width:79.8px;height:20.6px"></div>
<p class="sb" style="left:1519.3px;top:35.4px">100</p>
<i class="sq" style="left:1520.6px;top:113.3px;background:#f0108c"></i>
<i class="sq" style="left:1545.3px;top:113.3px;background:#e1f5fe"></i>
<i class="sq" style="left:1570.5px;top:113.3px;background:#a9c4e9"></i>
<div class="ed" style="left:1514.3px;top:134.0px;width:78px;height:19.8px"></div>
<p class="sb" style="left:1519.3px;top:135.9px">61 °C</p>
<div class="btn" style="left:1514.5px;top:174.4px;width:44.9px;height:24.2px"></div>
<div class="btn" style="left:1561.5px;top:174.4px;width:33.8px;height:24.2px"></div>
<p class="sb" style="left:1518.5px;top:178.6px">Auto Fit</p>
<p class="sb" style="left:1565.3px;top:178.6px;transform:scaleX(.885)">Reset</p>
<div class="ed" style="left:1514.3px;top:211.0px;width:79.8px;height:20.4px"></div>
<p class="sb" style="left:1519.3px;top:213.0px">0</p>
<b style="left:0;top:0;right:0;height:62px;background:linear-gradient(rgba(0,0,0,.15),rgba(0,0,0,.04) 34px,rgba(0,0,0,0))"></b>
<b class="wb"></b></div>
<div class="win" style="left:1384.9px;top:1453.8px;width:1607.7px;height:233.4px">
<div class="tb" style="height:34px;"></div>
<svg width="17.2" height="17.2" style="left:9.8px;top:7.8px"><use href="#ap"/></svg>
<p class="tt" style="left:32.0px;top:6.8px">GT Cores Power</p>
<svg width="12" height="12" style="left:1581.3px;top:10.2px"><use href="#cx"/></svg>
<b style="left:0;top:33.3px;width:1510.7px;height:1.2px;background:#9a9a9a"></b>
<div class="ga" style="left:1.0px;top:34.5px;width:1509.1px;height:196.6px">
<b class="gg" style="background-image:repeating-linear-gradient(to right,#b2ccf0 0,#b2ccf0 .95px,transparent .95px,transparent 15.625px),repeating-linear-gradient(to bottom,#b2ccf0 0,#b2ccf0 .95px,transparent .95px,transparent 15.625px);background-position:11.70px 0,0 8.20px"></b>
<svg width="1509.1" height="196.6" style="left:0;top:0" viewBox="0 0 1509.1 196.6"><path d="M44.1 196.1H46.1V194.8H50.1V196.1H1509.1" fill="none" stroke="#003a80" stroke-width="1.6" stroke-linejoin="round"/></svg>
<b style="left:0;top:0;width:16px;bottom:0;background:linear-gradient(to right,rgba(120,150,170,.20),rgba(120,150,170,0))"></b>
<b style="left:0;top:0;right:0;height:3px;background:linear-gradient(rgba(100,120,140,.25),rgba(100,120,140,0))"></b>
</div>
<div class="ed" style="left:1514.3px;top:33.4px;width:79.8px;height:20.6px"></div>
<p class="sb" style="left:1519.3px;top:35.4px">20.000</p>
<i class="sq" style="left:1520.6px;top:113.3px;background:#003a80"></i>
<i class="sq" style="left:1545.3px;top:113.3px;background:#e1f5fe"></i>
<i class="sq" style="left:1570.5px;top:113.3px;background:#a9c4e9"></i>
<div class="ed" style="left:1514.3px;top:134.0px;width:78px;height:19.8px"></div>
<p class="sb" style="left:1519.3px;top:135.9px">0.006 W</p>
<div class="btn" style="left:1514.5px;top:174.4px;width:44.9px;height:24.2px"></div>
<div class="btn" style="left:1561.5px;top:174.4px;width:33.8px;height:24.2px"></div>
<p class="sb" style="left:1518.5px;top:178.6px">Auto Fit</p>
<p class="sb" style="left:1565.3px;top:178.6px;transform:scaleX(.885)">Reset</p>
<div class="ed" style="left:1514.3px;top:211.0px;width:79.8px;height:20.4px"></div>
<p class="sb" style="left:1519.3px;top:213.0px">0.000</p>
<b class="wb"></b></div>
</body></html>
